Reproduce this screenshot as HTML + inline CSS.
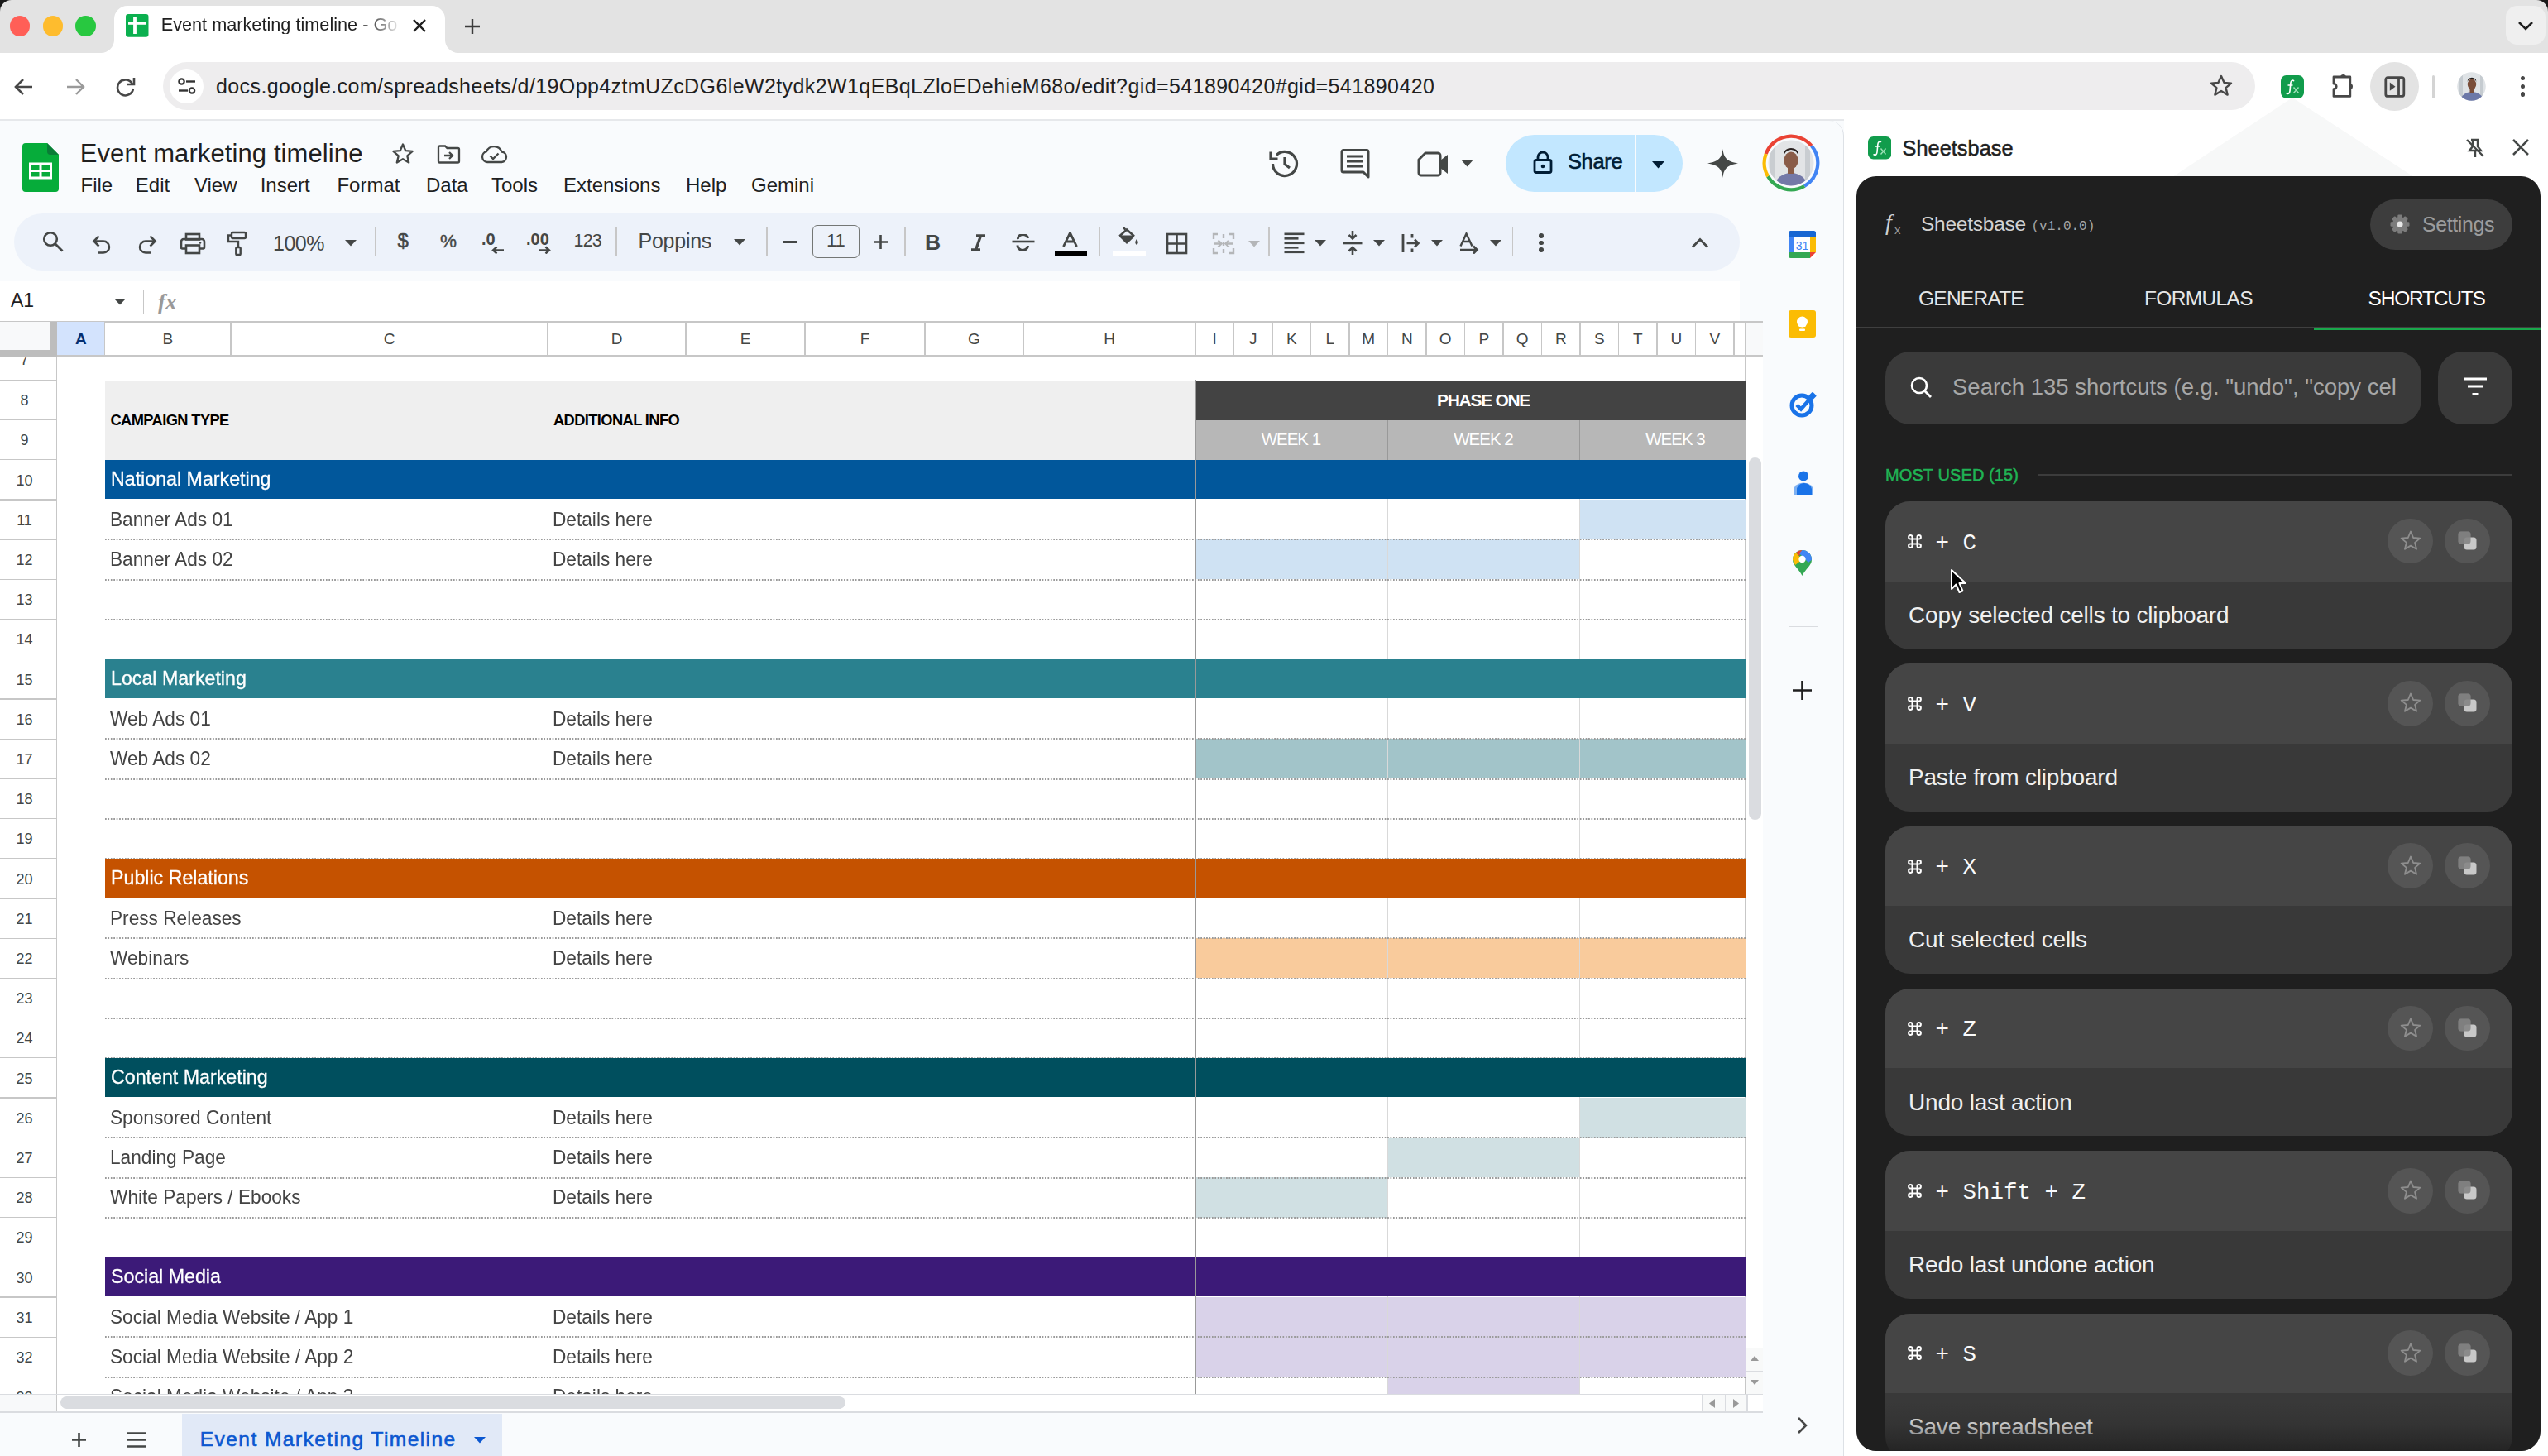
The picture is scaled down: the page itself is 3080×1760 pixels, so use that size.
<!DOCTYPE html><html><head><meta charset="utf-8"><style>html,body{margin:0;padding:0;width:3080px;height:1760px;overflow:hidden;position:relative;font-family:"Liberation Sans",sans-serif;background:#fff}</style></head><body>
<div style="position:absolute;left:0px;top:0px;width:3080px;height:64px;background:#e3e3e3"></div>
<div style="position:absolute;left:12.100000000000001px;top:19.2px;width:24.4px;height:24.4px;background:#ff5f57;border-radius:50%"></div>
<div style="position:absolute;left:51.8px;top:19.2px;width:24.4px;height:24.4px;background:#febc2e;border-radius:50%"></div>
<div style="position:absolute;left:91.39999999999999px;top:19.2px;width:24.4px;height:24.4px;background:#28c840;border-radius:50%"></div>
<div style="position:absolute;left:138px;top:7px;width:400px;height:64px;background:#fff;border-radius:16px 16px 0 0"></div>
<svg style="position:absolute;left:122px;top:48px" width="16" height="16" viewBox="0 0 16 16"><path d="M16 0 V16 H0 A16 16 0 0 0 16 0Z" fill="#fff"/></svg>
<svg style="position:absolute;left:538px;top:48px" width="16" height="16" viewBox="0 0 16 16"><path d="M0 0 V16 H16 A16 16 0 0 1 0 0Z" fill="#fff"/></svg>
<svg style="position:absolute;left:152px;top:17px" width="27.5" height="27.7" viewBox="0 0 27.5 27.7"><rect x="0" y="0" width="27.5" height="27.7" rx="3" fill="#0bb04f"/><rect x="9.1" y="3" width="3.8" height="21" fill="#fff"/><rect x="3" y="9.2" width="21" height="3.6" fill="#fff"/></svg>
<div style="position:absolute;left:194.7px;top:19.26px;font-size:21.7px;line-height:21.7px;color:#1f1f1f;font-weight:normal;font-family:'Liberation Sans', sans-serif;white-space:nowrap;letter-spacing:0px;width:292px;overflow:hidden;-webkit-mask-image:linear-gradient(90deg,#000 84%,transparent 100%)">Event marketing timeline - Go</div>
<svg style="position:absolute;left:498px;top:22px" width="18" height="18" viewBox="0 0 18 18"><path d="M2 2 L16 16 M16 2 L2 16" stroke="#1f1f1f" stroke-width="2.4"/></svg>
<svg style="position:absolute;left:561px;top:22px" width="20" height="20" viewBox="0 0 20 20"><path d="M10 1 V19 M1 10 H19" stroke="#3c3c3c" stroke-width="2.4"/></svg>
<div style="position:absolute;left:3029px;top:7px;width:48px;height:47px;background:#efefef;border-radius:14px"></div>
<svg style="position:absolute;left:3043px;top:24px" width="20" height="14" viewBox="0 0 20 14"><path d="M2 3 L10 11 L18 3" stroke="#1f1f1f" stroke-width="2.6" fill="none"/></svg>
<svg style="position:absolute;left:0px;top:0px" width="14" height="14" viewBox="0 0 14 14"><path d="M0 0 H14 A14 14 0 0 0 0 14Z" fill="#1a1a1a"/></svg>
<svg style="position:absolute;left:3066px;top:0px" width="14" height="14" viewBox="0 0 14 14"><path d="M14 0 H0 A14 14 0 0 1 14 14Z" fill="#1a1a1a"/></svg>
<div style="position:absolute;left:0px;top:64px;width:3080px;height:81px;background:#fff"></div>
<div style="position:absolute;left:0px;top:144px;width:2229px;height:2px;background:#e6e8eb"></div>
<svg style="position:absolute;left:17px;top:94px" width="24" height="22" viewBox="0 0 24 22"><path d="M22 11 H3 M11 2 L2 11 L11 20" stroke="#474747" stroke-width="2.6" fill="none"/></svg>
<svg style="position:absolute;left:79px;top:94px" width="24" height="22" viewBox="0 0 24 22"><path d="M2 11 H21 M13 2 L22 11 L13 20" stroke="#9a9a9a" stroke-width="2.4" fill="none"/></svg>
<svg style="position:absolute;left:139px;top:93px" width="26" height="24" viewBox="0 0 26 24"><path d="M21 8.5 A9.5 9.5 0 1 0 22 14" stroke="#474747" stroke-width="2.6" fill="none"/><path d="M23 1 V9 H15" stroke="#474747" stroke-width="2.6" fill="none"/></svg>
<div style="position:absolute;left:197px;top:75px;width:2529px;height:58px;background:#eeedee;border-radius:29px"></div>
<div style="position:absolute;left:205.2px;top:84px;width:40.8px;height:40.8px;background:#fff;border-radius:50%"></div>
<svg style="position:absolute;left:213px;top:92px" width="26" height="26" viewBox="0 0 26 26"><circle cx="6.5" cy="6.5" r="3.2" stroke="#333" stroke-width="2.2" fill="none"/><path d="M12 6.5 H23" stroke="#333" stroke-width="2.4"/><circle cx="19" cy="17.5" r="3.2" stroke="#333" stroke-width="2.2" fill="none"/><path d="M3 17.5 H14" stroke="#333" stroke-width="2.4"/></svg>
<div style="position:absolute;left:261px;top:91.55px;font-size:25px;line-height:25px;color:#1f1f1f;font-weight:normal;font-family:'Liberation Sans', sans-serif;white-space:nowrap;letter-spacing:0.4px;">docs.google.com<span style="color:#1f1f1f">/spreadsheets/d/19Opp4ztmUZcDG6leW2tydk2W1qEBqLZloEDehieM68o/edit?gid=541890420#gid=541890420</span></div>
<svg style="position:absolute;left:2670px;top:89px" width="30" height="30" viewBox="0 0 30 30"><path d="M15 3 L18.6 11 L27 11.6 L20.6 17.2 L22.6 25.6 L15 21 L7.4 25.6 L9.4 17.2 L3 11.6 L11.4 11 Z" stroke="#474747" stroke-width="2.4" fill="none" stroke-linejoin="round"/></svg>
<svg style="position:absolute;left:2757px;top:90.7px" width="28" height="27.6" viewBox="0 0 28 27.6"><rect width="28" height="27.6" rx="6.5" fill="#119c4c"/><path d="M15.5 6.5 C13.5 5.5 12 7 11.8 10 L11 19 C10.7 22 9 23 7 21.8" stroke="#fff" stroke-width="1.7" fill="none" stroke-linecap="round"/><path d="M8.5 12 H14.5" stroke="#fff" stroke-width="1.5"/><path d="M15.5 14.5 L21.5 21.5 M21.5 14.5 L15.5 21.5" stroke="#9fe0b8" stroke-width="1.5"/></svg>
<svg style="position:absolute;left:2816px;top:85px" width="38" height="36" viewBox="0 0 38 36"><path d="M5 8 H24.8 V31.4 H5 V22.6 A3.2 3.2 0 0 0 5 16.2 Z" stroke="#474747" stroke-width="2.8" fill="none" stroke-linejoin="round"/><path d="M13 8.5 A3.5 3.5 0 0 1 20 8.5Z" fill="#474747"/><path d="M24.5 16 A3.5 3.5 0 0 1 24.5 23Z" fill="#474747"/></svg>
<div style="position:absolute;left:2865.4px;top:75px;width:58.8px;height:58.8px;background:#e3e3e3;border-radius:50%"></div>
<svg style="position:absolute;left:2880px;top:90px" width="30" height="30" viewBox="0 0 30 30"><rect x="3.8" y="3.7" width="22" height="22.7" rx="2.5" stroke="#474747" stroke-width="2.8" fill="none"/><path d="M19.5 3.7 V26.4" stroke="#474747" stroke-width="2.8"/><path d="M8.8 9.6 L15.5 14.7 L8.8 19.8Z" fill="#474747"/></svg>
<div style="position:absolute;left:2940px;top:91px;width:2.5px;height:28px;background:#d4d4d4;border-radius:2px"></div>
<svg style="position:absolute;left:2970px;top:87px" width="35" height="35" viewBox="0 0 35 35"><defs><clipPath id="av2"><circle cx="17.5" cy="17.5" r="17.3"/></clipPath></defs><g clip-path="url(#av2)"><rect width="35" height="35" fill="#dfe3e6"/><rect x="3" y="0" width="4" height="35" fill="#c5cbd0"/><rect x="28" y="0" width="4" height="35" fill="#c5cbd0"/><ellipse cx="18" cy="33" rx="13" ry="9" fill="#6c78a8"/><rect x="15.5" y="20" width="5" height="6" fill="#7a4e3a"/><ellipse cx="18" cy="15" rx="5.2" ry="6.5" fill="#7a4e3a"/><path d="M12.6 13 A5.4 5 0 0 1 23.4 13 L23 9.5 A5.5 4.5 0 0 0 13 9.5Z" fill="#1f1a18"/></g></svg>
<div style="position:absolute;left:3046.6px;top:92.0px;width:5.4px;height:5.4px;background:#474747;border-radius:50%"></div>
<div style="position:absolute;left:3046.6px;top:101.7px;width:5.4px;height:5.4px;background:#474747;border-radius:50%"></div>
<div style="position:absolute;left:3046.6px;top:111.3px;width:5.4px;height:5.4px;background:#474747;border-radius:50%"></div>
<div style="position:absolute;left:0px;top:146px;width:2229px;height:1614px;background:#f9fbfd"></div>
<div style="position:absolute;left:2100px;top:146px;width:129px;height:1614px;border-right:1.5px solid #dde1e6;border-top-right-radius:18px;box-sizing:border-box;background:#f9fbfd"></div>
<svg style="position:absolute;left:27px;top:173px" width="44" height="59" viewBox="0 0 44 59"><path d="M4 0 H30 L44 14 V55 A4 4 0 0 1 40 59 H4 A4 4 0 0 1 0 55 V4 A4 4 0 0 1 4 0Z" fill="#06ac3a"/><path d="M30 0 L44 14 H34 A4 4 0 0 1 30 10Z" fill="#0a7d37"/><rect x="8" y="23.5" width="28" height="20" fill="#fff"/><rect x="11" y="26.5" width="9.5" height="5.5" fill="#06ac3a"/><rect x="23.5" y="26.5" width="9.5" height="5.5" fill="#06ac3a"/><rect x="11" y="35" width="9.5" height="5.5" fill="#06ac3a"/><rect x="23.5" y="35" width="9.5" height="5.5" fill="#06ac3a"/></svg>
<div style="position:absolute;left:96.7px;top:169.65px;font-size:31px;line-height:31px;color:#1f1f1f;font-weight:normal;font-family:'Liberation Sans', sans-serif;white-space:nowrap;letter-spacing:0.1px;">Event marketing timeline</div>
<svg style="position:absolute;left:473px;top:172px" width="28" height="27" viewBox="0 0 28 27"><path d="M14 2.5 L17.3 10.2 L25.6 10.9 L19.3 16.4 L21.2 24.5 L14 20.2 L6.8 24.5 L8.7 16.4 L2.4 10.9 L10.7 10.2Z" stroke="#444746" stroke-width="2.3" fill="none" stroke-linejoin="round"/></svg>
<svg style="position:absolute;left:528px;top:175px" width="29" height="23" viewBox="0 0 29 23"><path d="M2 3 A1.5 1.5 0 0 1 3.5 1.5 H10 L12.5 4 H25.5 A1.5 1.5 0 0 1 27 5.5 V20 A1.5 1.5 0 0 1 25.5 21.5 H3.5 A1.5 1.5 0 0 1 2 20Z" stroke="#444746" stroke-width="2.3" fill="none"/><path d="M9 13 H19 M15 9 L19 13 L15 17" stroke="#444746" stroke-width="2.3" fill="none"/></svg>
<svg style="position:absolute;left:581px;top:175px" width="33" height="23" viewBox="0 0 33 23"><path d="M8 21 A6.5 6.5 0 0 1 7 8.2 A10 10 0 0 1 25.5 8.5 A6.3 6.3 0 0 1 25.5 21 Z" stroke="#444746" stroke-width="2.3" fill="none" stroke-linejoin="round"/><path d="M11.5 13.5 L15 17 L21.5 10.5" stroke="#444746" stroke-width="2.3" fill="none"/></svg>
<div style="position:absolute;left:97.5px;top:212.00px;font-size:24px;line-height:24px;color:#1f1f1f;font-weight:normal;font-family:'Liberation Sans', sans-serif;white-space:nowrap;letter-spacing:0px;">File</div>
<div style="position:absolute;left:163.8px;top:212.00px;font-size:24px;line-height:24px;color:#1f1f1f;font-weight:normal;font-family:'Liberation Sans', sans-serif;white-space:nowrap;letter-spacing:0px;">Edit</div>
<div style="position:absolute;left:234.9px;top:212.00px;font-size:24px;line-height:24px;color:#1f1f1f;font-weight:normal;font-family:'Liberation Sans', sans-serif;white-space:nowrap;letter-spacing:0px;">View</div>
<div style="position:absolute;left:314.7px;top:212.00px;font-size:24px;line-height:24px;color:#1f1f1f;font-weight:normal;font-family:'Liberation Sans', sans-serif;white-space:nowrap;letter-spacing:0px;">Insert</div>
<div style="position:absolute;left:407.4px;top:212.00px;font-size:24px;line-height:24px;color:#1f1f1f;font-weight:normal;font-family:'Liberation Sans', sans-serif;white-space:nowrap;letter-spacing:0px;">Format</div>
<div style="position:absolute;left:515px;top:212.00px;font-size:24px;line-height:24px;color:#1f1f1f;font-weight:normal;font-family:'Liberation Sans', sans-serif;white-space:nowrap;letter-spacing:0px;">Data</div>
<div style="position:absolute;left:594px;top:212.00px;font-size:24px;line-height:24px;color:#1f1f1f;font-weight:normal;font-family:'Liberation Sans', sans-serif;white-space:nowrap;letter-spacing:0px;">Tools</div>
<div style="position:absolute;left:681px;top:212.00px;font-size:24px;line-height:24px;color:#1f1f1f;font-weight:normal;font-family:'Liberation Sans', sans-serif;white-space:nowrap;letter-spacing:0px;">Extensions</div>
<div style="position:absolute;left:829px;top:212.00px;font-size:24px;line-height:24px;color:#1f1f1f;font-weight:normal;font-family:'Liberation Sans', sans-serif;white-space:nowrap;letter-spacing:0px;">Help</div>
<div style="position:absolute;left:908px;top:212.00px;font-size:24px;line-height:24px;color:#1f1f1f;font-weight:normal;font-family:'Liberation Sans', sans-serif;white-space:nowrap;letter-spacing:0px;">Gemini</div>
<svg style="position:absolute;left:1533px;top:179px" width="40" height="38" viewBox="0 0 40 38"><path d="M5.5 19 A14.5 14.5 0 1 0 10 8.5" stroke="#444746" stroke-width="3.2" fill="none"/><path d="M3 4.5 V13 H11.5" stroke="#444746" stroke-width="3.2" fill="none"/><path d="M20 11 V19.5 L26 24" stroke="#444746" stroke-width="3.2" fill="none"/></svg>
<svg style="position:absolute;left:1620px;top:180px" width="38" height="37" viewBox="0 0 38 37"><path d="M2 3.5 A2 2 0 0 1 4 1.5 H32 A2 2 0 0 1 34 3.5 V34 L28 28 H4 A2 2 0 0 1 2 26Z" stroke="#444746" stroke-width="3" fill="none" stroke-linejoin="round"/><path d="M8 9 H28 M8 15 H28 M8 21 H28" stroke="#444746" stroke-width="3"/></svg>
<svg style="position:absolute;left:1713px;top:183px" width="40" height="31" viewBox="0 0 40 31"><path d="M10 2 H25 A3 3 0 0 1 28 5 V26 A3 3 0 0 1 25 29 H5 A3 3 0 0 1 2 26 V10Z" stroke="#444746" stroke-width="3" fill="none" stroke-linejoin="round"/><path d="M28 11 L37 4 V27 L28 20Z" fill="#444746"/></svg>
<svg style="position:absolute;left:1766px;top:193px" width="15" height="9" viewBox="0 0 15 9"><path d="M0 0 H15 L7.5 8.5Z" fill="#444746"/></svg>
<div style="position:absolute;left:1820px;top:162.7px;width:214px;height:69.3px;background:#c2e7ff;border-radius:35px"></div>
<div style="position:absolute;left:1975.5px;top:162.7px;width:1.6px;height:69.3px;background:#f9fbfd"></div>
<svg style="position:absolute;left:1853px;top:182px" width="24" height="28" viewBox="0 0 24 28"><rect x="2" y="11.5" width="20" height="15" rx="2" stroke="#001d35" stroke-width="2.8" fill="none"/><path d="M6 11.5 V8 A6 6 0 0 1 18 8 V11.5" stroke="#001d35" stroke-width="2.8" fill="none"/><circle cx="12" cy="19" r="2.3" fill="#001d35"/></svg>
<div style="position:absolute;left:1894.9px;top:183.42px;font-size:25.5px;line-height:25.5px;color:#001d35;font-weight:normal;font-family:'Liberation Sans', sans-serif;white-space:nowrap;letter-spacing:-0.3px;-webkit-text-stroke:0.6px #001d35">Share</div>
<svg style="position:absolute;left:1997px;top:195px" width="15" height="9" viewBox="0 0 15 9"><path d="M0 0 H15 L7.5 8.5Z" fill="#001d35"/></svg>
<svg style="position:absolute;left:2064px;top:180px" width="37" height="35" viewBox="0 0 37 35"><path d="M18.5 0 C19.5 10 23 15.5 37 17.5 C23 19.5 19.5 25 18.5 35 C17.5 25 14 19.5 0 17.5 C14 15.5 17.5 10 18.5 0Z" fill="#444746"/></svg>
<svg style="position:absolute;left:2130px;top:162px" width="70" height="70" viewBox="0 0 70 70"><path d="M4.65 23.95 A32.3 32.3 0 0 1 59.74 14.24" stroke="#ea4335" stroke-width="4.2" fill="none"/><path d="M59.74 14.24 A32.3 32.3 0 0 1 51.15 62.97" stroke="#4285f4" stroke-width="4.2" fill="none"/><path d="M51.15 62.97 A32.3 32.3 0 0 1 7.03 51.15" stroke="#34a853" stroke-width="4.2" fill="none"/><path d="M7.03 51.15 A32.3 32.3 0 0 1 4.65 23.95" stroke="#fbbc04" stroke-width="4.2" fill="none"/><defs><clipPath id="avc"><circle cx="35" cy="35" r="27.5"/></clipPath></defs><g clip-path="url(#avc)"><rect width="70" height="70" fill="#e2e4e6"/><rect x="10" y="8" width="6" height="60" fill="#c9cdd1"/><rect x="52" y="8" width="6" height="60" fill="#c9cdd1"/><ellipse cx="35" cy="62" rx="19" ry="15" fill="#7479a8"/><rect x="31" y="40" width="8" height="8" fill="#8a5c48"/><ellipse cx="35" cy="32" rx="8.5" ry="10.5" fill="#8a5c48"/><path d="M26 28 A9 9 0 0 1 44 28 L44 24 A9 7 0 0 0 26 24Z" fill="#2a2220"/></g></svg>
<div style="position:absolute;left:17px;top:257.8px;width:2086.4px;height:68.8px;background:#edf2fa;border-radius:34.4px"></div>
<svg style="position:absolute;left:50px;top:278px" width="28" height="28" viewBox="0 0 28 28"><circle cx="11" cy="11" r="7.8" stroke="#444746" stroke-width="2.6" fill="none"/><path d="M16.8 16.8 L25.5 25.5" stroke="#444746" stroke-width="2.8"/></svg>
<svg style="position:absolute;left:110px;top:283px" width="26" height="24" viewBox="0 0 26 24"><path d="M4 8.5 H15 A7 7 0 0 1 15 22.5 H8" stroke="#444746" stroke-width="2.6" fill="none"/><path d="M9.5 2.5 L3.5 8.5 L9.5 14.5" stroke="#444746" stroke-width="2.6" fill="none"/></svg>
<svg style="position:absolute;left:165px;top:283px" width="26" height="24" viewBox="0 0 26 24"><path d="M22 8.5 H11 A7 7 0 0 0 11 22.5 H18" stroke="#444746" stroke-width="2.6" fill="none"/><path d="M16.5 2.5 L22.5 8.5 L16.5 14.5" stroke="#444746" stroke-width="2.6" fill="none"/></svg>
<svg style="position:absolute;left:217px;top:281px" width="32" height="27" viewBox="0 0 32 27"><rect x="8" y="2" width="16" height="6.5" stroke="#444746" stroke-width="2.6" fill="none"/><path d="M8 19.5 H3.5 A1.5 1.5 0 0 1 2 18 V11 A3 3 0 0 1 5 8 H27 A3 3 0 0 1 30 11 V18 A1.5 1.5 0 0 1 28.5 19.5 H24" stroke="#444746" stroke-width="2.6" fill="none"/><rect x="8" y="15.5" width="16" height="9.5" stroke="#444746" stroke-width="2.6" fill="none"/><circle cx="25" cy="12.5" r="1.3" fill="#444746"/></svg>
<svg style="position:absolute;left:273px;top:279px" width="26" height="31" viewBox="0 0 26 31"><rect x="7" y="2" width="17" height="7" rx="1.5" stroke="#444746" stroke-width="2.4" fill="none"/><path d="M7 5.5 H3 V13 H15 V21" stroke="#444746" stroke-width="2.4" fill="none"/><rect x="12.3" y="20" width="5.4" height="9" rx="1" stroke="#444746" stroke-width="2.4" fill="none"/></svg>
<div style="position:absolute;left:330px;top:281.75px;font-size:25px;line-height:25px;color:#444746;font-weight:normal;font-family:'Liberation Sans', sans-serif;white-space:nowrap;letter-spacing:-0.5px;">100%</div>
<svg style="position:absolute;left:417px;top:289.5px" width="14" height="8" viewBox="0 0 14 8"><path d="M0 0 H14 L7 7.5Z" fill="#444746"/></svg>
<div style="position:absolute;left:453.25px;top:275px;width:1.5px;height:34px;background:#c7c7c7"></div>
<div style="position:absolute;left:480.5px;top:279.10px;font-size:24px;line-height:24px;color:#444746;font-weight:normal;font-family:'Liberation Sans', sans-serif;white-space:nowrap;letter-spacing:0px;-webkit-text-stroke:0.5px #444746">$</div>
<div style="position:absolute;left:532px;top:281.18px;font-size:22.5px;line-height:22.5px;color:#444746;font-weight:normal;font-family:'Liberation Sans', sans-serif;white-space:nowrap;letter-spacing:0px;-webkit-text-stroke:0.4px #444746">%</div>
<svg style="position:absolute;left:582px;top:279px" width="32" height="28" viewBox="0 0 32 28"><text x="0" y="17" font-family="Liberation Sans" font-weight="bold" font-size="20" fill="#444746">.0</text><path d="M27 23.5 H14 M18.5 19.5 L14 23.5 L18.5 27.5" stroke="#444746" stroke-width="2.4" fill="none"/></svg>
<svg style="position:absolute;left:636px;top:279px" width="34" height="28" viewBox="0 0 34 28"><text x="0" y="17" font-family="Liberation Sans" font-weight="bold" font-size="20" fill="#444746">.00</text><path d="M15 23.5 H28 M23.5 19.5 L28 23.5 L23.5 27.5" stroke="#444746" stroke-width="2.4" fill="none"/></svg>
<div style="position:absolute;left:693.5px;top:281.23px;font-size:21.5px;line-height:21.5px;color:#444746;font-weight:normal;font-family:'Liberation Sans', sans-serif;white-space:nowrap;letter-spacing:-0.8px;">123</div>
<div style="position:absolute;left:744.25px;top:275px;width:1.5px;height:34px;background:#c7c7c7"></div>
<div style="position:absolute;left:771.5px;top:279.05px;font-size:25px;line-height:25px;color:#444746;font-weight:normal;font-family:'Liberation Sans', sans-serif;white-space:nowrap;letter-spacing:-0.25px;">Poppins</div>
<svg style="position:absolute;left:887px;top:289px" width="14" height="8" viewBox="0 0 14 8"><path d="M0 0 H14 L7 7.5Z" fill="#444746"/></svg>
<div style="position:absolute;left:926.25px;top:275px;width:1.5px;height:34px;background:#c7c7c7"></div>
<div style="position:absolute;left:946px;top:291.3px;width:17px;height:2.6px;background:#444746"></div>
<div style="position:absolute;left:981.7px;top:272.4px;width:57.5px;height:39.6px;border:1.8px solid #747775;border-radius:6px;box-sizing:border-box"></div>
<div style="position:absolute;left:510.20000000000005px;width:1000px;text-align:center;top:280.38px;font-size:22.5px;line-height:22.5px;color:#444746;font-weight:normal;font-family:'Liberation Sans', sans-serif;white-space:nowrap;letter-spacing:-0.5px;">11</div>
<svg style="position:absolute;left:1055px;top:283px" width="19" height="19" viewBox="0 0 19 19"><path d="M9.5 1 V18 M1 9.5 H18" stroke="#444746" stroke-width="2.6"/></svg>
<div style="position:absolute;left:1093.25px;top:275px;width:1.5px;height:34px;background:#c7c7c7"></div>
<div style="position:absolute;left:1118px;top:280.08px;font-size:26.5px;line-height:26.5px;color:#444746;font-weight:bold;font-family:'Liberation Sans', sans-serif;white-space:nowrap;letter-spacing:0px;">B</div>
<svg style="position:absolute;left:1172px;top:283px" width="21" height="21" viewBox="0 0 21 21"><path d="M8 2 H19 M2 19 H13 M13.5 2 L7.5 19" stroke="#444746" stroke-width="3.4" fill="none"/></svg>
<svg style="position:absolute;left:1222px;top:283px" width="30" height="22" viewBox="0 0 30 22"><path d="M1.5 9 H28.5" stroke="#444746" stroke-width="2.6"/><path d="M8.5 6 A6 5 0 0 1 20.5 5" stroke="#444746" stroke-width="3" fill="none"/><path d="M8 13.5 A6 5.5 0 0 0 20.5 14" stroke="#444746" stroke-width="3" fill="none"/></svg>
<svg style="position:absolute;left:1284px;top:280px" width="19" height="19" viewBox="0 0 19 19"><path d="M1.5 18 L9.5 1.5 L17.5 18 M4.5 12 H14.5" stroke="#444746" stroke-width="2.8" fill="none"/></svg>
<div style="position:absolute;left:1274.5px;top:302.5px;width:39.5px;height:6.5px;background:#000"></div>
<div style="position:absolute;left:1328.75px;top:275px;width:1.5px;height:34px;background:#c7c7c7"></div>
<svg style="position:absolute;left:1350px;top:273px" width="28" height="27" viewBox="0 0 28 27"><path d="M8 2 L12.5 7" stroke="#444746" stroke-width="2.6"/><path d="M3 13 L12 4.5 L21.5 13 L12 22 Z" fill="#444746"/><path d="M3 13 L12 4.5 L21.5 13Z" fill="#edf2fa" transform="translate(0,-1.5)"/><path d="M3.2 12.5 L12 4.5 L21 12.5" stroke="#444746" stroke-width="2.6" fill="none"/><path d="M24 16 C22 19 21.5 21 24 23 C26.5 21 26 19 24 16Z" fill="#444746"/></svg>
<div style="position:absolute;left:1344.5px;top:302.5px;width:40px;height:6.5px;background:#fff"></div>
<svg style="position:absolute;left:1409px;top:281px" width="27" height="27" viewBox="0 0 27 27"><rect x="2" y="2" width="23" height="23" stroke="#444746" stroke-width="2.6" fill="none"/><path d="M13.5 2 V25 M2 13.5 H25" stroke="#444746" stroke-width="2.6"/></svg>
<svg style="position:absolute;left:1465px;top:281px" width="28" height="27" viewBox="0 0 28 27"><path d="M7 2 H2 V8 M2 19 V25 H7 M21 2 H26 V8 M26 19 V25 H21" stroke="#b4b6b8" stroke-width="2.4" fill="none"/><path d="M2 13.5 H11 M7.5 9.5 L11.5 13.5 L7.5 17.5 M26 13.5 H17 M20.5 9.5 L16.5 13.5 L20.5 17.5" stroke="#b4b6b8" stroke-width="2.4" fill="none"/><path d="M14 2 V7 M14 11 V16 M14 20 V25" stroke="#b4b6b8" stroke-width="2.4"/></svg>
<svg style="position:absolute;left:1509px;top:290.5px" width="14" height="8" viewBox="0 0 14 8"><path d="M0 0 H14 L7 7.5Z" fill="#b4b6b8"/></svg>
<div style="position:absolute;left:1533.25px;top:275px;width:1.5px;height:34px;background:#c7c7c7"></div>
<svg style="position:absolute;left:1551px;top:281px" width="27" height="26" viewBox="0 0 27 26"><rect x="1.5" y="0.5" width="24" height="2.6" fill="#444746"/><rect x="1.5" y="6" width="17" height="2.6" fill="#444746"/><rect x="1.5" y="11.5" width="24" height="2.6" fill="#444746"/><rect x="1.5" y="17" width="17" height="2.6" fill="#444746"/><rect x="1.5" y="22.5" width="24" height="2.6" fill="#444746"/></svg>
<svg style="position:absolute;left:1589px;top:290px" width="14" height="8" viewBox="0 0 14 8"><path d="M0 0 H14 L7 7.5Z" fill="#444746"/></svg>
<svg style="position:absolute;left:1622px;top:278px" width="26" height="31" viewBox="0 0 26 31"><path d="M1.5 16 H24.5" stroke="#444746" stroke-width="2.6"/><path d="M13 1 V10 M8.5 6 L13 10.5 L17.5 6 M13 30 V21 M8.5 25.5 L13 21 L17.5 25.5" stroke="#444746" stroke-width="2.6" fill="none"/></svg>
<svg style="position:absolute;left:1659.5px;top:290px" width="14" height="8" viewBox="0 0 14 8"><path d="M0 0 H14 L7 7.5Z" fill="#444746"/></svg>
<svg style="position:absolute;left:1693px;top:282px" width="25" height="24" viewBox="0 0 25 24"><path d="M3 1 V23 M14 1 V5.5 M14 18.5 V23" stroke="#444746" stroke-width="2.8"/><path d="M7.5 12 H21.5 M17 7.5 L21.5 12 L17 16.5" stroke="#444746" stroke-width="2.6" fill="none"/></svg>
<svg style="position:absolute;left:1729.5px;top:290px" width="14" height="8" viewBox="0 0 14 8"><path d="M0 0 H14 L7 7.5Z" fill="#444746"/></svg>
<svg style="position:absolute;left:1764px;top:281px" width="26" height="26" viewBox="0 0 26 26"><path d="M1.5 16.5 L8.5 1.5 L15.5 16.5 M4.3 11 H13" stroke="#444746" stroke-width="2.4" fill="none"/><path d="M1 21 H21 M17 16.5 L21.5 21 L17 25.5" stroke="#444746" stroke-width="2.6" fill="none"/></svg>
<svg style="position:absolute;left:1800.5px;top:290px" width="14" height="8" viewBox="0 0 14 8"><path d="M0 0 H14 L7 7.5Z" fill="#444746"/></svg>
<div style="position:absolute;left:1827.75px;top:275px;width:1.5px;height:34px;background:#c7c7c7"></div>
<div style="position:absolute;left:1860px;top:282.2px;width:5.6px;height:5.6px;background:#444746;border-radius:50%"></div>
<div style="position:absolute;left:1860px;top:290.9px;width:5.6px;height:5.6px;background:#444746;border-radius:50%"></div>
<div style="position:absolute;left:1860px;top:299.2px;width:5.6px;height:5.6px;background:#444746;border-radius:50%"></div>
<svg style="position:absolute;left:2044px;top:287px" width="22" height="14" viewBox="0 0 22 14"><path d="M2 11.5 L11 2.5 L20 11.5" stroke="#444746" stroke-width="2.8" fill="none"/></svg>
<div style="position:absolute;left:0px;top:340px;width:2103.4px;height:49px;background:#fff"></div>
<div style="position:absolute;left:13px;top:351.70px;font-size:23px;line-height:23px;color:#1f1f1f;font-weight:normal;font-family:'Liberation Sans', sans-serif;white-space:nowrap;letter-spacing:0px;">A1</div>
<svg style="position:absolute;left:138px;top:361px" width="14" height="8" viewBox="0 0 14 8"><path d="M0 0 H14 L7 7.5Z" fill="#444746"/></svg>
<div style="position:absolute;left:172.5px;top:351px;width:1.5px;height:28px;background:#c7c7c7"></div>
<svg style="position:absolute;left:190px;top:350px" width="30" height="30" viewBox="0 0 30 30"><text x="1" y="24" font-family="Liberation Serif" font-style="italic" font-weight="bold" font-size="27" fill="#999">fx</text></svg>
<svg style="position:absolute;left:2162px;top:279px" width="33" height="33" viewBox="0 0 33 33"><rect x="0" y="0" width="33" height="33" rx="2.5" fill="#fff"/><path d="M2.5 0 H30.5 A2.5 2.5 0 0 1 33 2.5 V7 H0 V2.5 A2.5 2.5 0 0 1 2.5 0Z" fill="#1967d2"/><path d="M0 7 H7 V26 H0Z" fill="#4285f4"/><path d="M26 7 H33 V26 H26Z" fill="#fbbc04"/><path d="M0 26 H26 V33 H2.5 A2.5 2.5 0 0 1 0 30.5Z" fill="#34a853"/><path d="M26 26 H33 L26 33Z" fill="#ea4335"/><rect x="7" y="7" width="19" height="19" fill="#fff"/><text x="16.5" y="22.5" text-anchor="middle" font-family="Liberation Sans" font-size="14" fill="#4285f4">31</text></svg>
<svg style="position:absolute;left:2162px;top:375px" width="33" height="33" viewBox="0 0 33 33"><rect width="33" height="33" rx="3" fill="#fbbc04"/><circle cx="16.5" cy="14" r="6.5" fill="#fff"/><rect x="12.5" y="16" width="8" height="4" fill="#fff"/><rect x="13" y="22.5" width="7" height="2.5" rx="1" fill="#fff"/></svg>
<svg style="position:absolute;left:2163px;top:472px" width="34" height="33" viewBox="0 0 34 33"><circle cx="15" cy="18" r="12" stroke="#1a73e8" stroke-width="5" fill="none"/><path d="M9 17.5 L14 22.5 L26 9" stroke="#1a73e8" stroke-width="4.5" fill="none"/><rect x="24.5" y="3" width="7" height="7" rx="1" transform="rotate(45 28 6.5)" fill="#1a73e8"/></svg>
<svg style="position:absolute;left:2165px;top:569px" width="28" height="31" viewBox="0 0 28 31"><circle cx="15" cy="6.5" r="6" fill="#1a73e8"/><path d="M3 24 A12 9.5 0 0 1 27 24 V29 H3Z" fill="#1a73e8" opacity="0.55"/><path d="M7 29 V24 A9 8 0 0 1 25 22 V29Z" fill="#1a73e8"/></svg>
<svg style="position:absolute;left:2166px;top:664px" width="25" height="33" viewBox="0 0 25 33"><path d="M12.5 1 A11.5 11.5 0 0 1 24 12.5 C24 20 16 24 12.5 32 C9 24 1 20 1 12.5 A11.5 11.5 0 0 1 12.5 1Z" fill="#34a853"/><path d="M1 12.5 A11.5 11.5 0 0 1 5 4 L12.5 12.5 L4 19Z" fill="#fbbc04"/><path d="M5 4 A11.5 11.5 0 0 1 12.5 1 L9 8Z" fill="#ea4335"/><path d="M12.5 1 A11.5 11.5 0 0 1 24 12.5 L20 16 L9 5Z" fill="#4285f4"/><circle cx="12.5" cy="12" r="4.2" fill="#fff"/></svg>
<div style="position:absolute;left:2161.5px;top:756.5px;width:35px;height:1.6px;background:#dadce0"></div>
<svg style="position:absolute;left:2166px;top:822px" width="25" height="25" viewBox="0 0 25 25"><path d="M12.5 1 V24 M1 12.5 H24" stroke="#1f1f1f" stroke-width="2.6"/></svg>
<svg style="position:absolute;left:2171px;top:1712px" width="14" height="22" viewBox="0 0 14 22"><path d="M3 2 L12 11 L3 20" stroke="#474747" stroke-width="2.6" fill="none"/></svg>
<div style="position:absolute;left:0px;top:1705.5px;width:2131px;height:1.5px;background:#e1e3e6"></div>
<svg style="position:absolute;left:86px;top:1731px" width="19" height="19" viewBox="0 0 19 19"><path d="M9.5 1 V18 M1 9.5 H18" stroke="#444746" stroke-width="2.6"/></svg>
<svg style="position:absolute;left:152px;top:1730px" width="26" height="21" viewBox="0 0 26 21"><path d="M1 2.5 H25 M1 10.5 H25 M1 18.5 H25" stroke="#444746" stroke-width="2.6"/></svg>
<div style="position:absolute;left:220px;top:1708.5px;width:387px;height:52px;background:#e1e9f7"></div>
<div style="position:absolute;left:241.8px;top:1728.17px;font-size:24.5px;line-height:24.5px;color:#0b57d0;font-weight:normal;font-family:'Liberation Sans', sans-serif;white-space:nowrap;letter-spacing:1.45px;-webkit-text-stroke:0.6px #0b57d0">Event Marketing Timeline</div>
<svg style="position:absolute;left:573px;top:1737px" width="14" height="8" viewBox="0 0 14 8"><path d="M0 0 H14 L7 7.5Z" fill="#0b57d0"/></svg>
<div style="position:absolute;left:0px;top:389px;width:2131px;height:1296.5px;background:#fff;overflow:hidden"></div>
<div style="position:absolute;left:0px;top:389.4px;width:2131px;height:41.200000000000045px;background:#fff"></div>
<div style="position:absolute;left:0px;top:388.4px;width:2131px;height:1.3px;background:#c7c7c7"></div>
<div style="position:absolute;left:0px;top:429.3px;width:2110px;height:1.3px;background:#c7c7c7"></div>
<div style="position:absolute;left:69px;top:389.4px;width:57.5px;height:39.90000000000005px;background:#d3e3fd"></div>
<div style="position:absolute;left:-402.25px;width:1000px;text-align:center;top:399.85px;font-size:19px;line-height:19px;color:#062e6f;font-weight:bold;font-family:'Liberation Sans', sans-serif;white-space:nowrap;letter-spacing:0px;">A</div>
<div style="position:absolute;left:125.85px;top:389.4px;width:1.3px;height:41.200000000000045px;background:#c7c7c7"></div>
<div style="position:absolute;left:-297.25px;width:1000px;text-align:center;top:399.85px;font-size:19px;line-height:19px;color:#444746;font-weight:normal;font-family:'Liberation Sans', sans-serif;white-space:nowrap;letter-spacing:0px;">B</div>
<div style="position:absolute;left:278.35px;top:389.4px;width:1.3px;height:41.200000000000045px;background:#c7c7c7"></div>
<div style="position:absolute;left:-29.5px;width:1000px;text-align:center;top:399.85px;font-size:19px;line-height:19px;color:#444746;font-weight:normal;font-family:'Liberation Sans', sans-serif;white-space:nowrap;letter-spacing:0px;">C</div>
<div style="position:absolute;left:661.35px;top:389.4px;width:1.3px;height:41.200000000000045px;background:#c7c7c7"></div>
<div style="position:absolute;left:245.5px;width:1000px;text-align:center;top:399.85px;font-size:19px;line-height:19px;color:#444746;font-weight:normal;font-family:'Liberation Sans', sans-serif;white-space:nowrap;letter-spacing:0px;">D</div>
<div style="position:absolute;left:828.35px;top:389.4px;width:1.3px;height:41.200000000000045px;background:#c7c7c7"></div>
<div style="position:absolute;left:401.0px;width:1000px;text-align:center;top:399.85px;font-size:19px;line-height:19px;color:#444746;font-weight:normal;font-family:'Liberation Sans', sans-serif;white-space:nowrap;letter-spacing:0px;">E</div>
<div style="position:absolute;left:972.35px;top:389.4px;width:1.3px;height:41.200000000000045px;background:#c7c7c7"></div>
<div style="position:absolute;left:545.5px;width:1000px;text-align:center;top:399.85px;font-size:19px;line-height:19px;color:#444746;font-weight:normal;font-family:'Liberation Sans', sans-serif;white-space:nowrap;letter-spacing:0px;">F</div>
<div style="position:absolute;left:1117.35px;top:389.4px;width:1.3px;height:41.200000000000045px;background:#c7c7c7"></div>
<div style="position:absolute;left:677.5px;width:1000px;text-align:center;top:399.85px;font-size:19px;line-height:19px;color:#444746;font-weight:normal;font-family:'Liberation Sans', sans-serif;white-space:nowrap;letter-spacing:0px;">G</div>
<div style="position:absolute;left:1236.35px;top:389.4px;width:1.3px;height:41.200000000000045px;background:#c7c7c7"></div>
<div style="position:absolute;left:841.0px;width:1000px;text-align:center;top:399.85px;font-size:19px;line-height:19px;color:#444746;font-weight:normal;font-family:'Liberation Sans', sans-serif;white-space:nowrap;letter-spacing:0px;">H</div>
<div style="position:absolute;left:1444.35px;top:389.4px;width:1.3px;height:41.200000000000045px;background:#c7c7c7"></div>
<div style="position:absolute;left:968.25px;width:1000px;text-align:center;top:399.85px;font-size:19px;line-height:19px;color:#444746;font-weight:normal;font-family:'Liberation Sans', sans-serif;white-space:nowrap;letter-spacing:0px;">I</div>
<div style="position:absolute;left:1490.85px;top:389.4px;width:1.3px;height:41.200000000000045px;background:#c7c7c7"></div>
<div style="position:absolute;left:1014.75px;width:1000px;text-align:center;top:399.85px;font-size:19px;line-height:19px;color:#444746;font-weight:normal;font-family:'Liberation Sans', sans-serif;white-space:nowrap;letter-spacing:0px;">J</div>
<div style="position:absolute;left:1537.35px;top:389.4px;width:1.3px;height:41.200000000000045px;background:#c7c7c7"></div>
<div style="position:absolute;left:1061.25px;width:1000px;text-align:center;top:399.85px;font-size:19px;line-height:19px;color:#444746;font-weight:normal;font-family:'Liberation Sans', sans-serif;white-space:nowrap;letter-spacing:0px;">K</div>
<div style="position:absolute;left:1583.85px;top:389.4px;width:1.3px;height:41.200000000000045px;background:#c7c7c7"></div>
<div style="position:absolute;left:1107.75px;width:1000px;text-align:center;top:399.85px;font-size:19px;line-height:19px;color:#444746;font-weight:normal;font-family:'Liberation Sans', sans-serif;white-space:nowrap;letter-spacing:0px;">L</div>
<div style="position:absolute;left:1630.35px;top:389.4px;width:1.3px;height:41.200000000000045px;background:#c7c7c7"></div>
<div style="position:absolute;left:1154.25px;width:1000px;text-align:center;top:399.85px;font-size:19px;line-height:19px;color:#444746;font-weight:normal;font-family:'Liberation Sans', sans-serif;white-space:nowrap;letter-spacing:0px;">M</div>
<div style="position:absolute;left:1676.85px;top:389.4px;width:1.3px;height:41.200000000000045px;background:#c7c7c7"></div>
<div style="position:absolute;left:1200.75px;width:1000px;text-align:center;top:399.85px;font-size:19px;line-height:19px;color:#444746;font-weight:normal;font-family:'Liberation Sans', sans-serif;white-space:nowrap;letter-spacing:0px;">N</div>
<div style="position:absolute;left:1723.35px;top:389.4px;width:1.3px;height:41.200000000000045px;background:#c7c7c7"></div>
<div style="position:absolute;left:1247.25px;width:1000px;text-align:center;top:399.85px;font-size:19px;line-height:19px;color:#444746;font-weight:normal;font-family:'Liberation Sans', sans-serif;white-space:nowrap;letter-spacing:0px;">O</div>
<div style="position:absolute;left:1769.85px;top:389.4px;width:1.3px;height:41.200000000000045px;background:#c7c7c7"></div>
<div style="position:absolute;left:1293.75px;width:1000px;text-align:center;top:399.85px;font-size:19px;line-height:19px;color:#444746;font-weight:normal;font-family:'Liberation Sans', sans-serif;white-space:nowrap;letter-spacing:0px;">P</div>
<div style="position:absolute;left:1816.35px;top:389.4px;width:1.3px;height:41.200000000000045px;background:#c7c7c7"></div>
<div style="position:absolute;left:1340.25px;width:1000px;text-align:center;top:399.85px;font-size:19px;line-height:19px;color:#444746;font-weight:normal;font-family:'Liberation Sans', sans-serif;white-space:nowrap;letter-spacing:0px;">Q</div>
<div style="position:absolute;left:1862.85px;top:389.4px;width:1.3px;height:41.200000000000045px;background:#c7c7c7"></div>
<div style="position:absolute;left:1386.75px;width:1000px;text-align:center;top:399.85px;font-size:19px;line-height:19px;color:#444746;font-weight:normal;font-family:'Liberation Sans', sans-serif;white-space:nowrap;letter-spacing:0px;">R</div>
<div style="position:absolute;left:1909.35px;top:389.4px;width:1.3px;height:41.200000000000045px;background:#c7c7c7"></div>
<div style="position:absolute;left:1433.25px;width:1000px;text-align:center;top:399.85px;font-size:19px;line-height:19px;color:#444746;font-weight:normal;font-family:'Liberation Sans', sans-serif;white-space:nowrap;letter-spacing:0px;">S</div>
<div style="position:absolute;left:1955.85px;top:389.4px;width:1.3px;height:41.200000000000045px;background:#c7c7c7"></div>
<div style="position:absolute;left:1479.75px;width:1000px;text-align:center;top:399.85px;font-size:19px;line-height:19px;color:#444746;font-weight:normal;font-family:'Liberation Sans', sans-serif;white-space:nowrap;letter-spacing:0px;">T</div>
<div style="position:absolute;left:2002.35px;top:389.4px;width:1.3px;height:41.200000000000045px;background:#c7c7c7"></div>
<div style="position:absolute;left:1526.25px;width:1000px;text-align:center;top:399.85px;font-size:19px;line-height:19px;color:#444746;font-weight:normal;font-family:'Liberation Sans', sans-serif;white-space:nowrap;letter-spacing:0px;">U</div>
<div style="position:absolute;left:2048.85px;top:389.4px;width:1.3px;height:41.200000000000045px;background:#c7c7c7"></div>
<div style="position:absolute;left:1572.75px;width:1000px;text-align:center;top:399.85px;font-size:19px;line-height:19px;color:#444746;font-weight:normal;font-family:'Liberation Sans', sans-serif;white-space:nowrap;letter-spacing:0px;">V</div>
<div style="position:absolute;left:2095.35px;top:389.4px;width:1.3px;height:41.200000000000045px;background:#c7c7c7"></div>
<div style="position:absolute;left:2109.35px;top:389.4px;width:1.3px;height:1315.6px;background:#c7c7c7"></div>
<div style="position:absolute;left:0px;top:389.4px;width:61px;height:33.200000000000045px;background:#f8f9fa"></div>
<div style="position:absolute;left:61px;top:389.4px;width:8px;height:41.200000000000045px;background:#bdbdbd"></div>
<div style="position:absolute;left:0px;top:422.6px;width:69px;height:8px;background:#bdbdbd"></div>
<div style="position:absolute;left:0px;top:430.6px;width:68px;height:1254.9px;background:#fff"></div>
<div style="position:absolute;left:67.7px;top:430.6px;width:1.3px;height:1274.4px;background:#c7c7c7"></div>
<div style="position:absolute;left:0;top:430.6px;width:68px;height:29px;overflow:hidden">
<div style="position:absolute;left:-470.5px;width:1000px;text-align:center;top:-4.50px;font-size:18px;line-height:18px;color:#444746;font-weight:normal;font-family:'Liberation Sans', sans-serif;white-space:nowrap;letter-spacing:0px;">7</div>
</div>
<div style="position:absolute;left:0px;top:458.75px;width:68px;height:1.3px;background:#c7c7c7"></div>
<div style="position:absolute;left:-470.5px;width:1000px;text-align:center;top:475.10px;font-size:18px;line-height:18px;color:#444746;font-weight:normal;font-family:'Liberation Sans', sans-serif;white-space:nowrap;letter-spacing:0px;">8</div>
<div style="position:absolute;left:0px;top:506.95px;width:68px;height:1.3px;background:#c7c7c7"></div>
<div style="position:absolute;left:-470.5px;width:1000px;text-align:center;top:523.30px;font-size:18px;line-height:18px;color:#444746;font-weight:normal;font-family:'Liberation Sans', sans-serif;white-space:nowrap;letter-spacing:0px;">9</div>
<div style="position:absolute;left:0px;top:555.15px;width:68px;height:1.3px;background:#c7c7c7"></div>
<div style="position:absolute;left:-470.5px;width:1000px;text-align:center;top:571.50px;font-size:18px;line-height:18px;color:#444746;font-weight:normal;font-family:'Liberation Sans', sans-serif;white-space:nowrap;letter-spacing:0px;">10</div>
<div style="position:absolute;left:0px;top:603.35px;width:68px;height:1.3px;background:#c7c7c7"></div>
<div style="position:absolute;left:-470.5px;width:1000px;text-align:center;top:619.70px;font-size:18px;line-height:18px;color:#444746;font-weight:normal;font-family:'Liberation Sans', sans-serif;white-space:nowrap;letter-spacing:0px;">11</div>
<div style="position:absolute;left:0px;top:651.5500000000001px;width:68px;height:1.3px;background:#c7c7c7"></div>
<div style="position:absolute;left:-470.5px;width:1000px;text-align:center;top:667.90px;font-size:18px;line-height:18px;color:#444746;font-weight:normal;font-family:'Liberation Sans', sans-serif;white-space:nowrap;letter-spacing:0px;">12</div>
<div style="position:absolute;left:0px;top:699.75px;width:68px;height:1.3px;background:#c7c7c7"></div>
<div style="position:absolute;left:-470.5px;width:1000px;text-align:center;top:716.10px;font-size:18px;line-height:18px;color:#444746;font-weight:normal;font-family:'Liberation Sans', sans-serif;white-space:nowrap;letter-spacing:0px;">13</div>
<div style="position:absolute;left:0px;top:747.95px;width:68px;height:1.3px;background:#c7c7c7"></div>
<div style="position:absolute;left:-470.5px;width:1000px;text-align:center;top:764.30px;font-size:18px;line-height:18px;color:#444746;font-weight:normal;font-family:'Liberation Sans', sans-serif;white-space:nowrap;letter-spacing:0px;">14</div>
<div style="position:absolute;left:0px;top:796.15px;width:68px;height:1.3px;background:#c7c7c7"></div>
<div style="position:absolute;left:-470.5px;width:1000px;text-align:center;top:812.50px;font-size:18px;line-height:18px;color:#444746;font-weight:normal;font-family:'Liberation Sans', sans-serif;white-space:nowrap;letter-spacing:0px;">15</div>
<div style="position:absolute;left:0px;top:844.35px;width:68px;height:1.3px;background:#c7c7c7"></div>
<div style="position:absolute;left:-470.5px;width:1000px;text-align:center;top:860.70px;font-size:18px;line-height:18px;color:#444746;font-weight:normal;font-family:'Liberation Sans', sans-serif;white-space:nowrap;letter-spacing:0px;">16</div>
<div style="position:absolute;left:0px;top:892.5500000000001px;width:68px;height:1.3px;background:#c7c7c7"></div>
<div style="position:absolute;left:-470.5px;width:1000px;text-align:center;top:908.90px;font-size:18px;line-height:18px;color:#444746;font-weight:normal;font-family:'Liberation Sans', sans-serif;white-space:nowrap;letter-spacing:0px;">17</div>
<div style="position:absolute;left:0px;top:940.75px;width:68px;height:1.3px;background:#c7c7c7"></div>
<div style="position:absolute;left:-470.5px;width:1000px;text-align:center;top:957.10px;font-size:18px;line-height:18px;color:#444746;font-weight:normal;font-family:'Liberation Sans', sans-serif;white-space:nowrap;letter-spacing:0px;">18</div>
<div style="position:absolute;left:0px;top:988.95px;width:68px;height:1.3px;background:#c7c7c7"></div>
<div style="position:absolute;left:-470.5px;width:1000px;text-align:center;top:1005.30px;font-size:18px;line-height:18px;color:#444746;font-weight:normal;font-family:'Liberation Sans', sans-serif;white-space:nowrap;letter-spacing:0px;">19</div>
<div style="position:absolute;left:0px;top:1037.15px;width:68px;height:1.3px;background:#c7c7c7"></div>
<div style="position:absolute;left:-470.5px;width:1000px;text-align:center;top:1053.50px;font-size:18px;line-height:18px;color:#444746;font-weight:normal;font-family:'Liberation Sans', sans-serif;white-space:nowrap;letter-spacing:0px;">20</div>
<div style="position:absolute;left:0px;top:1085.35px;width:68px;height:1.3px;background:#c7c7c7"></div>
<div style="position:absolute;left:-470.5px;width:1000px;text-align:center;top:1101.70px;font-size:18px;line-height:18px;color:#444746;font-weight:normal;font-family:'Liberation Sans', sans-serif;white-space:nowrap;letter-spacing:0px;">21</div>
<div style="position:absolute;left:0px;top:1133.55px;width:68px;height:1.3px;background:#c7c7c7"></div>
<div style="position:absolute;left:-470.5px;width:1000px;text-align:center;top:1149.90px;font-size:18px;line-height:18px;color:#444746;font-weight:normal;font-family:'Liberation Sans', sans-serif;white-space:nowrap;letter-spacing:0px;">22</div>
<div style="position:absolute;left:0px;top:1181.75px;width:68px;height:1.3px;background:#c7c7c7"></div>
<div style="position:absolute;left:-470.5px;width:1000px;text-align:center;top:1198.10px;font-size:18px;line-height:18px;color:#444746;font-weight:normal;font-family:'Liberation Sans', sans-serif;white-space:nowrap;letter-spacing:0px;">23</div>
<div style="position:absolute;left:0px;top:1229.9499999999998px;width:68px;height:1.3px;background:#c7c7c7"></div>
<div style="position:absolute;left:-470.5px;width:1000px;text-align:center;top:1246.30px;font-size:18px;line-height:18px;color:#444746;font-weight:normal;font-family:'Liberation Sans', sans-serif;white-space:nowrap;letter-spacing:0px;">24</div>
<div style="position:absolute;left:0px;top:1278.15px;width:68px;height:1.3px;background:#c7c7c7"></div>
<div style="position:absolute;left:-470.5px;width:1000px;text-align:center;top:1294.50px;font-size:18px;line-height:18px;color:#444746;font-weight:normal;font-family:'Liberation Sans', sans-serif;white-space:nowrap;letter-spacing:0px;">25</div>
<div style="position:absolute;left:0px;top:1326.35px;width:68px;height:1.3px;background:#c7c7c7"></div>
<div style="position:absolute;left:-470.5px;width:1000px;text-align:center;top:1342.70px;font-size:18px;line-height:18px;color:#444746;font-weight:normal;font-family:'Liberation Sans', sans-serif;white-space:nowrap;letter-spacing:0px;">26</div>
<div style="position:absolute;left:0px;top:1374.55px;width:68px;height:1.3px;background:#c7c7c7"></div>
<div style="position:absolute;left:-470.5px;width:1000px;text-align:center;top:1390.90px;font-size:18px;line-height:18px;color:#444746;font-weight:normal;font-family:'Liberation Sans', sans-serif;white-space:nowrap;letter-spacing:0px;">27</div>
<div style="position:absolute;left:0px;top:1422.75px;width:68px;height:1.3px;background:#c7c7c7"></div>
<div style="position:absolute;left:-470.5px;width:1000px;text-align:center;top:1439.10px;font-size:18px;line-height:18px;color:#444746;font-weight:normal;font-family:'Liberation Sans', sans-serif;white-space:nowrap;letter-spacing:0px;">28</div>
<div style="position:absolute;left:0px;top:1470.9499999999998px;width:68px;height:1.3px;background:#c7c7c7"></div>
<div style="position:absolute;left:-470.5px;width:1000px;text-align:center;top:1487.30px;font-size:18px;line-height:18px;color:#444746;font-weight:normal;font-family:'Liberation Sans', sans-serif;white-space:nowrap;letter-spacing:0px;">29</div>
<div style="position:absolute;left:0px;top:1519.15px;width:68px;height:1.3px;background:#c7c7c7"></div>
<div style="position:absolute;left:-470.5px;width:1000px;text-align:center;top:1535.50px;font-size:18px;line-height:18px;color:#444746;font-weight:normal;font-family:'Liberation Sans', sans-serif;white-space:nowrap;letter-spacing:0px;">30</div>
<div style="position:absolute;left:0px;top:1567.35px;width:68px;height:1.3px;background:#c7c7c7"></div>
<div style="position:absolute;left:-470.5px;width:1000px;text-align:center;top:1583.70px;font-size:18px;line-height:18px;color:#444746;font-weight:normal;font-family:'Liberation Sans', sans-serif;white-space:nowrap;letter-spacing:0px;">31</div>
<div style="position:absolute;left:0px;top:1615.5500000000002px;width:68px;height:1.3px;background:#c7c7c7"></div>
<div style="position:absolute;left:-470.5px;width:1000px;text-align:center;top:1631.90px;font-size:18px;line-height:18px;color:#444746;font-weight:normal;font-family:'Liberation Sans', sans-serif;white-space:nowrap;letter-spacing:0px;">32</div>
<div style="position:absolute;left:0px;top:1663.75px;width:68px;height:1.3px;background:#c7c7c7"></div>
<div style="position:absolute;left:-470.5px;width:1000px;text-align:center;top:1680.10px;font-size:18px;line-height:18px;color:#444746;font-weight:normal;font-family:'Liberation Sans', sans-serif;white-space:nowrap;letter-spacing:0px;">33</div>
<div style="position:absolute;left:0px;top:1685.5px;width:2131px;height:20px;background:#f9fbfd"></div>
<div style="position:absolute;left:126.5px;top:461px;width:1318.5px;height:94.79999999999995px;background:#efefef"></div>
<div style="position:absolute;left:133.5px;top:498.74px;font-size:18.3px;line-height:18.3px;color:#000;font-weight:bold;font-family:'Liberation Sans', sans-serif;white-space:nowrap;letter-spacing:-0.6px;">CAMPAIGN TYPE</div>
<div style="position:absolute;left:669px;top:498.74px;font-size:18.3px;line-height:18.3px;color:#000;font-weight:bold;font-family:'Liberation Sans', sans-serif;white-space:nowrap;letter-spacing:-0.6px;">ADDITIONAL INFO</div>
<div style="position:absolute;left:1445px;top:461px;width:665px;height:47.599999999999966px;background:#434343"></div>
<div style="position:absolute;left:1293px;width:1000px;text-align:center;top:472.85px;font-size:21px;line-height:21px;color:#fff;font-weight:bold;font-family:'Liberation Sans', sans-serif;white-space:nowrap;letter-spacing:-1.3px;">PHASE ONE</div>
<div style="position:absolute;left:1445px;top:508.09999999999997px;width:665px;height:47.69999999999999px;background:#b7b7b7"></div>
<div style="position:absolute;left:1060.4px;width:1000px;text-align:center;top:520.98px;font-size:20.5px;line-height:20.5px;color:#fff;font-weight:normal;font-family:'Liberation Sans', sans-serif;white-space:nowrap;letter-spacing:-1px;">WEEK 1</div>
<div style="position:absolute;left:1293px;width:1000px;text-align:center;top:520.98px;font-size:20.5px;line-height:20.5px;color:#fff;font-weight:normal;font-family:'Liberation Sans', sans-serif;white-space:nowrap;letter-spacing:-1px;">WEEK 2</div>
<div style="position:absolute;left:1525px;width:1000px;text-align:center;top:520.98px;font-size:20.5px;line-height:20.5px;color:#fff;font-weight:normal;font-family:'Liberation Sans', sans-serif;white-space:nowrap;letter-spacing:-1px;">WEEK 3</div>
<div style="position:absolute;left:1676.5px;top:507.59999999999997px;width:1.2px;height:48.19999999999999px;background:#999"></div>
<div style="position:absolute;left:1909.0px;top:507.59999999999997px;width:1.2px;height:48.19999999999999px;background:#999"></div>
<div style="position:absolute;left:1909.5px;top:604.0px;width:200.5px;height:48.2px;background:#cfe2f3"></div>
<div style="position:absolute;left:1445px;top:652.2px;width:232px;height:48.2px;background:#cfe2f3"></div>
<div style="position:absolute;left:1677px;top:652.2px;width:232.5px;height:48.2px;background:#cfe2f3"></div>
<div style="position:absolute;left:1445px;top:893.2px;width:232px;height:48.2px;background:#a2c4c9"></div>
<div style="position:absolute;left:1677px;top:893.2px;width:232.5px;height:48.2px;background:#a2c4c9"></div>
<div style="position:absolute;left:1909.5px;top:893.2px;width:200.5px;height:48.2px;background:#a2c4c9"></div>
<div style="position:absolute;left:1445px;top:1134.2px;width:232px;height:48.2px;background:#f9cb9c"></div>
<div style="position:absolute;left:1677px;top:1134.2px;width:232.5px;height:48.2px;background:#f9cb9c"></div>
<div style="position:absolute;left:1909.5px;top:1134.2px;width:200.5px;height:48.2px;background:#f9cb9c"></div>
<div style="position:absolute;left:1909.5px;top:1327.0px;width:200.5px;height:48.2px;background:#d0e0e3"></div>
<div style="position:absolute;left:1677px;top:1375.2px;width:232.5px;height:48.2px;background:#d0e0e3"></div>
<div style="position:absolute;left:1445px;top:1423.4px;width:232px;height:48.2px;background:#d0e0e3"></div>
<div style="position:absolute;left:1445px;top:1568.0px;width:232px;height:48.2px;background:#d9d2e9"></div>
<div style="position:absolute;left:1677px;top:1568.0px;width:232.5px;height:48.2px;background:#d9d2e9"></div>
<div style="position:absolute;left:1909.5px;top:1568.0px;width:200.5px;height:48.2px;background:#d9d2e9"></div>
<div style="position:absolute;left:1445px;top:1616.2000000000003px;width:232px;height:48.2px;background:#d9d2e9"></div>
<div style="position:absolute;left:1677px;top:1616.2000000000003px;width:232.5px;height:48.2px;background:#d9d2e9"></div>
<div style="position:absolute;left:1909.5px;top:1616.2000000000003px;width:200.5px;height:48.2px;background:#d9d2e9"></div>
<div style="position:absolute;left:1677px;top:1664.4px;width:232.5px;height:21.09999999999991px;background:#d9d2e9"></div>
<div style="position:absolute;left:1676.5px;top:555.8px;width:1.2px;height:1129.7px;background:#d9d9d9"></div>
<div style="position:absolute;left:1909.0px;top:555.8px;width:1.2px;height:1129.7px;background:#d9d9d9"></div>
<div style="position:absolute;left:126.5px;top:651.4000000000001px;width:1983.5px;height:2px;background-image:linear-gradient(90deg,#9a9a9a 55%,transparent 55%);background-size:3.43px 2px"></div>
<div style="position:absolute;left:126.5px;top:699.6px;width:1983.5px;height:2px;background-image:linear-gradient(90deg,#9a9a9a 55%,transparent 55%);background-size:3.43px 2px"></div>
<div style="position:absolute;left:126.5px;top:747.8000000000001px;width:1983.5px;height:2px;background-image:linear-gradient(90deg,#9a9a9a 55%,transparent 55%);background-size:3.43px 2px"></div>
<div style="position:absolute;left:126.5px;top:796.0px;width:1983.5px;height:2px;background-image:linear-gradient(90deg,#9a9a9a 55%,transparent 55%);background-size:3.43px 2px"></div>
<div style="position:absolute;left:126.5px;top:892.4000000000001px;width:1983.5px;height:2px;background-image:linear-gradient(90deg,#9a9a9a 55%,transparent 55%);background-size:3.43px 2px"></div>
<div style="position:absolute;left:126.5px;top:940.6px;width:1983.5px;height:2px;background-image:linear-gradient(90deg,#9a9a9a 55%,transparent 55%);background-size:3.43px 2px"></div>
<div style="position:absolute;left:126.5px;top:988.8000000000001px;width:1983.5px;height:2px;background-image:linear-gradient(90deg,#9a9a9a 55%,transparent 55%);background-size:3.43px 2px"></div>
<div style="position:absolute;left:126.5px;top:1037.0000000000002px;width:1983.5px;height:2px;background-image:linear-gradient(90deg,#9a9a9a 55%,transparent 55%);background-size:3.43px 2px"></div>
<div style="position:absolute;left:126.5px;top:1133.4px;width:1983.5px;height:2px;background-image:linear-gradient(90deg,#9a9a9a 55%,transparent 55%);background-size:3.43px 2px"></div>
<div style="position:absolute;left:126.5px;top:1181.6000000000001px;width:1983.5px;height:2px;background-image:linear-gradient(90deg,#9a9a9a 55%,transparent 55%);background-size:3.43px 2px"></div>
<div style="position:absolute;left:126.5px;top:1229.8px;width:1983.5px;height:2px;background-image:linear-gradient(90deg,#9a9a9a 55%,transparent 55%);background-size:3.43px 2px"></div>
<div style="position:absolute;left:126.5px;top:1278.0000000000002px;width:1983.5px;height:2px;background-image:linear-gradient(90deg,#9a9a9a 55%,transparent 55%);background-size:3.43px 2px"></div>
<div style="position:absolute;left:126.5px;top:1374.4px;width:1983.5px;height:2px;background-image:linear-gradient(90deg,#9a9a9a 55%,transparent 55%);background-size:3.43px 2px"></div>
<div style="position:absolute;left:126.5px;top:1422.6000000000001px;width:1983.5px;height:2px;background-image:linear-gradient(90deg,#9a9a9a 55%,transparent 55%);background-size:3.43px 2px"></div>
<div style="position:absolute;left:126.5px;top:1470.8px;width:1983.5px;height:2px;background-image:linear-gradient(90deg,#9a9a9a 55%,transparent 55%);background-size:3.43px 2px"></div>
<div style="position:absolute;left:126.5px;top:1519.0000000000002px;width:1983.5px;height:2px;background-image:linear-gradient(90deg,#9a9a9a 55%,transparent 55%);background-size:3.43px 2px"></div>
<div style="position:absolute;left:126.5px;top:1615.4000000000003px;width:1983.5px;height:2px;background-image:linear-gradient(90deg,#9a9a9a 55%,transparent 55%);background-size:3.43px 2px"></div>
<div style="position:absolute;left:126.5px;top:1663.6000000000001px;width:1983.5px;height:2px;background-image:linear-gradient(90deg,#9a9a9a 55%,transparent 55%);background-size:3.43px 2px"></div>
<div style="position:absolute;left:126.5px;top:555.8px;width:1983.5px;height:47.2px;background:#01579b"></div>
<div style="position:absolute;left:133.5px;top:566.94px;font-size:24.3px;line-height:24.3px;color:#fff;font-weight:normal;font-family:'Liberation Sans', sans-serif;white-space:nowrap;letter-spacing:0px;-webkit-text-stroke:0.3px #fff;transform:scaleX(0.955);transform-origin:0 0">National Marketing</div>
<div style="position:absolute;left:126.5px;top:796.8px;width:1983.5px;height:47.2px;background:#2a818f"></div>
<div style="position:absolute;left:133.5px;top:807.94px;font-size:24.3px;line-height:24.3px;color:#fff;font-weight:normal;font-family:'Liberation Sans', sans-serif;white-space:nowrap;letter-spacing:0px;-webkit-text-stroke:0.3px #fff;transform:scaleX(0.955);transform-origin:0 0">Local Marketing</div>
<div style="position:absolute;left:126.5px;top:1037.8000000000002px;width:1983.5px;height:47.2px;background:#c55200"></div>
<div style="position:absolute;left:133.5px;top:1048.95px;font-size:24.3px;line-height:24.3px;color:#fff;font-weight:normal;font-family:'Liberation Sans', sans-serif;white-space:nowrap;letter-spacing:0px;-webkit-text-stroke:0.3px #fff;transform:scaleX(0.955);transform-origin:0 0">Public Relations</div>
<div style="position:absolute;left:126.5px;top:1278.8000000000002px;width:1983.5px;height:47.2px;background:#004f5e"></div>
<div style="position:absolute;left:133.5px;top:1289.95px;font-size:24.3px;line-height:24.3px;color:#fff;font-weight:normal;font-family:'Liberation Sans', sans-serif;white-space:nowrap;letter-spacing:0px;-webkit-text-stroke:0.3px #fff;transform:scaleX(0.955);transform-origin:0 0">Content Marketing</div>
<div style="position:absolute;left:126.5px;top:1519.8000000000002px;width:1983.5px;height:47.2px;background:#3c1a78"></div>
<div style="position:absolute;left:133.5px;top:1530.95px;font-size:24.3px;line-height:24.3px;color:#fff;font-weight:normal;font-family:'Liberation Sans', sans-serif;white-space:nowrap;letter-spacing:0px;-webkit-text-stroke:0.3px #fff;transform:scaleX(0.955);transform-origin:0 0">Social Media</div>
<div style="position:absolute;left:132.5px;top:615.77px;font-size:24.5px;line-height:24.5px;color:#434343;font-weight:normal;font-family:'Liberation Sans', sans-serif;white-space:nowrap;letter-spacing:0px;;transform:scaleX(0.925);transform-origin:0 0">Banner Ads 01</div>
<div style="position:absolute;left:668px;top:615.77px;font-size:24.5px;line-height:24.5px;color:#434343;font-weight:normal;font-family:'Liberation Sans', sans-serif;white-space:nowrap;letter-spacing:0px;;transform:scaleX(0.925);transform-origin:0 0">Details here</div>
<div style="position:absolute;left:132.5px;top:663.98px;font-size:24.5px;line-height:24.5px;color:#434343;font-weight:normal;font-family:'Liberation Sans', sans-serif;white-space:nowrap;letter-spacing:0px;;transform:scaleX(0.925);transform-origin:0 0">Banner Ads 02</div>
<div style="position:absolute;left:668px;top:663.98px;font-size:24.5px;line-height:24.5px;color:#434343;font-weight:normal;font-family:'Liberation Sans', sans-serif;white-space:nowrap;letter-spacing:0px;;transform:scaleX(0.925);transform-origin:0 0">Details here</div>
<div style="position:absolute;left:132.5px;top:856.77px;font-size:24.5px;line-height:24.5px;color:#434343;font-weight:normal;font-family:'Liberation Sans', sans-serif;white-space:nowrap;letter-spacing:0px;;transform:scaleX(0.925);transform-origin:0 0">Web Ads 01</div>
<div style="position:absolute;left:668px;top:856.77px;font-size:24.5px;line-height:24.5px;color:#434343;font-weight:normal;font-family:'Liberation Sans', sans-serif;white-space:nowrap;letter-spacing:0px;;transform:scaleX(0.925);transform-origin:0 0">Details here</div>
<div style="position:absolute;left:132.5px;top:904.98px;font-size:24.5px;line-height:24.5px;color:#434343;font-weight:normal;font-family:'Liberation Sans', sans-serif;white-space:nowrap;letter-spacing:0px;;transform:scaleX(0.925);transform-origin:0 0">Web Ads 02</div>
<div style="position:absolute;left:668px;top:904.98px;font-size:24.5px;line-height:24.5px;color:#434343;font-weight:normal;font-family:'Liberation Sans', sans-serif;white-space:nowrap;letter-spacing:0px;;transform:scaleX(0.925);transform-origin:0 0">Details here</div>
<div style="position:absolute;left:132.5px;top:1097.77px;font-size:24.5px;line-height:24.5px;color:#434343;font-weight:normal;font-family:'Liberation Sans', sans-serif;white-space:nowrap;letter-spacing:0px;;transform:scaleX(0.925);transform-origin:0 0">Press Releases</div>
<div style="position:absolute;left:668px;top:1097.77px;font-size:24.5px;line-height:24.5px;color:#434343;font-weight:normal;font-family:'Liberation Sans', sans-serif;white-space:nowrap;letter-spacing:0px;;transform:scaleX(0.925);transform-origin:0 0">Details here</div>
<div style="position:absolute;left:132.5px;top:1145.97px;font-size:24.5px;line-height:24.5px;color:#434343;font-weight:normal;font-family:'Liberation Sans', sans-serif;white-space:nowrap;letter-spacing:0px;;transform:scaleX(0.925);transform-origin:0 0">Webinars</div>
<div style="position:absolute;left:668px;top:1145.97px;font-size:24.5px;line-height:24.5px;color:#434343;font-weight:normal;font-family:'Liberation Sans', sans-serif;white-space:nowrap;letter-spacing:0px;;transform:scaleX(0.925);transform-origin:0 0">Details here</div>
<div style="position:absolute;left:132.5px;top:1338.77px;font-size:24.5px;line-height:24.5px;color:#434343;font-weight:normal;font-family:'Liberation Sans', sans-serif;white-space:nowrap;letter-spacing:0px;;transform:scaleX(0.925);transform-origin:0 0">Sponsored Content</div>
<div style="position:absolute;left:668px;top:1338.77px;font-size:24.5px;line-height:24.5px;color:#434343;font-weight:normal;font-family:'Liberation Sans', sans-serif;white-space:nowrap;letter-spacing:0px;;transform:scaleX(0.925);transform-origin:0 0">Details here</div>
<div style="position:absolute;left:132.5px;top:1386.97px;font-size:24.5px;line-height:24.5px;color:#434343;font-weight:normal;font-family:'Liberation Sans', sans-serif;white-space:nowrap;letter-spacing:0px;;transform:scaleX(0.925);transform-origin:0 0">Landing Page</div>
<div style="position:absolute;left:668px;top:1386.97px;font-size:24.5px;line-height:24.5px;color:#434343;font-weight:normal;font-family:'Liberation Sans', sans-serif;white-space:nowrap;letter-spacing:0px;;transform:scaleX(0.925);transform-origin:0 0">Details here</div>
<div style="position:absolute;left:132.5px;top:1435.17px;font-size:24.5px;line-height:24.5px;color:#434343;font-weight:normal;font-family:'Liberation Sans', sans-serif;white-space:nowrap;letter-spacing:0px;;transform:scaleX(0.925);transform-origin:0 0">White Papers / Ebooks</div>
<div style="position:absolute;left:668px;top:1435.17px;font-size:24.5px;line-height:24.5px;color:#434343;font-weight:normal;font-family:'Liberation Sans', sans-serif;white-space:nowrap;letter-spacing:0px;;transform:scaleX(0.925);transform-origin:0 0">Details here</div>
<div style="position:absolute;left:132.5px;top:1579.77px;font-size:24.5px;line-height:24.5px;color:#434343;font-weight:normal;font-family:'Liberation Sans', sans-serif;white-space:nowrap;letter-spacing:0px;;transform:scaleX(0.925);transform-origin:0 0">Social Media Website / App 1</div>
<div style="position:absolute;left:668px;top:1579.77px;font-size:24.5px;line-height:24.5px;color:#434343;font-weight:normal;font-family:'Liberation Sans', sans-serif;white-space:nowrap;letter-spacing:0px;;transform:scaleX(0.925);transform-origin:0 0">Details here</div>
<div style="position:absolute;left:132.5px;top:1627.98px;font-size:24.5px;line-height:24.5px;color:#434343;font-weight:normal;font-family:'Liberation Sans', sans-serif;white-space:nowrap;letter-spacing:0px;;transform:scaleX(0.925);transform-origin:0 0">Social Media Website / App 2</div>
<div style="position:absolute;left:668px;top:1627.98px;font-size:24.5px;line-height:24.5px;color:#434343;font-weight:normal;font-family:'Liberation Sans', sans-serif;white-space:nowrap;letter-spacing:0px;;transform:scaleX(0.925);transform-origin:0 0">Details here</div>
<div style="position:absolute;left:132.5px;top:1676.17px;font-size:24.5px;line-height:24.5px;color:#434343;font-weight:normal;font-family:'Liberation Sans', sans-serif;white-space:nowrap;letter-spacing:0px;;transform:scaleX(0.925);transform-origin:0 0">Social Media Website / App 3</div>
<div style="position:absolute;left:668px;top:1676.17px;font-size:24.5px;line-height:24.5px;color:#434343;font-weight:normal;font-family:'Liberation Sans', sans-serif;white-space:nowrap;letter-spacing:0px;;transform:scaleX(0.925);transform-origin:0 0">Details here</div>
<div style="position:absolute;left:1444.3px;top:459px;width:1.6px;height:1226.5px;background:#999"></div>
<div style="position:absolute;left:0px;top:1684.6px;width:2131px;height:22.4px;background:#fff;border-top:1.4px solid #dadce0;box-sizing:border-box"></div>
<div style="position:absolute;left:0px;top:1686px;width:67.7px;height:21px;background:#f8f9fa"></div>
<div style="position:absolute;left:67.7px;top:1685.5px;width:1.3px;height:21px;background:#c7c7c7"></div>
<div style="position:absolute;left:72.5px;top:1688px;width:949px;height:15px;background:#dadce0;border-radius:8px"></div>
<div style="position:absolute;left:2057px;top:1686px;width:53.5px;height:21px;background:#f8f9f9"></div>
<div style="position:absolute;left:2056.5px;top:1686px;width:1.3px;height:21px;background:#dadce0"></div>
<div style="position:absolute;left:2084.5px;top:1686px;width:1.3px;height:21px;background:#dadce0"></div>
<div style="position:absolute;left:2110px;top:1686px;width:2.5px;height:21px;background:#dadce0"></div>
<svg style="position:absolute;left:2066px;top:1690.5px" width="7" height="11" viewBox="0 0 7 11"><path d="M7 0 V11 L0 5.5Z" fill="#999"/></svg>
<svg style="position:absolute;left:2095px;top:1690.5px" width="7" height="11" viewBox="0 0 7 11"><path d="M0 0 V11 L7 5.5Z" fill="#999"/></svg>
<div style="position:absolute;left:2110.5px;top:430.6px;width:20.5px;height:1254px;background:#fff"></div>
<div style="position:absolute;left:2114px;top:553px;width:15px;height:438px;background:#dadce0;border-radius:8px"></div>
<div style="position:absolute;left:2111px;top:1629.7px;width:20px;height:55px;background:#f8f9f9"></div>
<div style="position:absolute;left:2111px;top:1629px;width:20px;height:1.4px;background:#dadce0"></div>
<div style="position:absolute;left:2111px;top:1657px;width:20px;height:1.3px;background:#dadce0"></div>
<svg style="position:absolute;left:2116px;top:1638.5px" width="10" height="6" viewBox="0 0 10 6"><path d="M0 6 H10 L5 0Z" fill="#999"/></svg>
<svg style="position:absolute;left:2116px;top:1668px" width="10" height="6" viewBox="0 0 10 6"><path d="M0 0 H10 L5 6Z" fill="#999"/></svg>
<div style="position:absolute;left:2110px;top:389.4px;width:21px;height:41px;background:#f8f9fa"></div>
<div style="position:absolute;left:2110px;top:429.3px;width:21px;height:1.3px;background:#c7c7c7"></div>
<div style="position:absolute;left:2110px;top:388.4px;width:21px;height:1.3px;background:#c7c7c7"></div>
<div style="position:absolute;left:0px;top:1706.3px;width:2131px;height:1.5px;background:#dadce0"></div>
<div style="position:absolute;left:2229px;top:146px;width:851px;height:1614px;background:#fff"></div>
<svg style="position:absolute;left:2600px;top:110px" width="340" height="104" viewBox="0 0 340 104"><path d="M171 8 L316.6 103 H27.5Z" fill="#f7f8f8"/></svg>
<svg style="position:absolute;left:2257.5px;top:165px" width="28.5" height="27.5" viewBox="0 0 28.5 27.5"><rect width="28.5" height="27.5" rx="6.5" fill="#119c4c"/><path d="M15.5 6.5 C13.5 5.5 12 7 11.8 10 L11 19 C10.7 22 9 23 7 21.8" stroke="#fff" stroke-width="1.6" fill="none" stroke-linecap="round"/><path d="M8.5 12 H14.5" stroke="#fff" stroke-width="1.4"/><path d="M15.5 14.5 L21.5 21.5 M21.5 14.5 L15.5 21.5" stroke="#9fe0b8" stroke-width="1.4"/></svg>
<div style="position:absolute;left:2299.5px;top:166.50px;font-size:25.3px;line-height:25.3px;color:#1f1f1f;font-weight:normal;font-family:'Liberation Sans', sans-serif;white-space:nowrap;letter-spacing:0.05px;-webkit-text-stroke:0.55px #1f1f1f">Sheetsbase</div>
<svg style="position:absolute;left:2979px;top:166px" width="26" height="26" viewBox="0 0 26 26"><path d="M8 3 H18 M10 3 V11 L6 16 H20 L16 11 V3 M13 16 V24" stroke="#444746" stroke-width="2.4" fill="none"/><path d="M3 3 L23 23" stroke="#444746" stroke-width="2.4"/></svg>
<svg style="position:absolute;left:3036px;top:167px" width="22" height="22" viewBox="0 0 22 22"><path d="M2 2 L20 20 M20 2 L2 20" stroke="#444746" stroke-width="2.6"/></svg>
<div style="position:absolute;left:2244px;top:213px;width:827px;height:1541px;background:#1f1f1f;border-radius:24px;overflow:hidden"><div style="position:absolute;left:-2244px;top:-213px;width:3080px;height:1760px">
<svg style="position:absolute;left:2279px;top:256px" width="28" height="30" viewBox="0 0 28 30"><text x="0" y="22" font-family="Liberation Serif" font-style="italic" font-size="28" fill="#d0d0d0">f</text><text x="11" y="27" font-family="Liberation Sans" font-size="15" fill="#9a9a9a">x</text></svg>
<div style="position:absolute;left:2322px;top:258.78px;font-size:24.5px;line-height:24.5px;color:#d2d2d2;font-weight:normal;font-family:'Liberation Sans', sans-serif;white-space:nowrap;letter-spacing:-0.25px;">Sheetsbase</div>
<div style="position:absolute;left:2455.5px;top:265.84px;font-size:16px;line-height:16px;color:#a6a6a6;font-weight:normal;font-family:'Liberation Mono', monospace;white-space:nowrap;letter-spacing:0px;">(v1.0.0)</div>
<div style="position:absolute;left:2864.6px;top:240.8px;width:172.7px;height:61.5px;background:#3d3d3d;border-radius:31px"></div>
<svg style="position:absolute;left:2887px;top:257px" width="28" height="28" viewBox="0 0 28 28"><circle cx="14" cy="14" r="9" fill="#7c7c7c"/><rect x="11.3" y="2.5" width="5.4" height="6" rx="1.2" fill="#7c7c7c" transform="rotate(0 14 14)"/><rect x="11.3" y="2.5" width="5.4" height="6" rx="1.2" fill="#7c7c7c" transform="rotate(45 14 14)"/><rect x="11.3" y="2.5" width="5.4" height="6" rx="1.2" fill="#7c7c7c" transform="rotate(90 14 14)"/><rect x="11.3" y="2.5" width="5.4" height="6" rx="1.2" fill="#7c7c7c" transform="rotate(135 14 14)"/><rect x="11.3" y="2.5" width="5.4" height="6" rx="1.2" fill="#7c7c7c" transform="rotate(180 14 14)"/><rect x="11.3" y="2.5" width="5.4" height="6" rx="1.2" fill="#7c7c7c" transform="rotate(225 14 14)"/><rect x="11.3" y="2.5" width="5.4" height="6" rx="1.2" fill="#7c7c7c" transform="rotate(270 14 14)"/><rect x="11.3" y="2.5" width="5.4" height="6" rx="1.2" fill="#7c7c7c" transform="rotate(315 14 14)"/><circle cx="14" cy="14" r="3.6" fill="#e8e8e8"/></svg>
<div style="position:absolute;left:2928px;top:259.15px;font-size:25px;line-height:25px;color:#9c9c9c;font-weight:normal;font-family:'Liberation Sans', sans-serif;white-space:nowrap;letter-spacing:-0.4px;">Settings</div>
<div style="position:absolute;left:2319px;top:349.18px;font-size:24.5px;line-height:24.5px;color:#e6e6e6;font-weight:normal;font-family:'Liberation Sans', sans-serif;white-space:nowrap;letter-spacing:-0.75px;">GENERATE</div>
<div style="position:absolute;left:2592px;top:349.18px;font-size:24.5px;line-height:24.5px;color:#e6e6e6;font-weight:normal;font-family:'Liberation Sans', sans-serif;white-space:nowrap;letter-spacing:-0.64px;">FORMULAS</div>
<div style="position:absolute;left:2862.5px;top:349.18px;font-size:24.5px;line-height:24.5px;color:#ffffff;font-weight:normal;font-family:'Liberation Sans', sans-serif;white-space:nowrap;letter-spacing:-1.2px;">SHORTCUTS</div>
<div style="position:absolute;left:2244px;top:395.2px;width:827px;height:1.8px;background:#3f3f3f"></div>
<div style="position:absolute;left:2797px;top:396px;width:274px;height:3px;background:#19a84b"></div>
<div style="position:absolute;left:2279px;top:425px;width:648px;height:88px;background:#3a3a3a;border-radius:30px"></div>
<svg style="position:absolute;left:2308px;top:454px" width="30" height="30" viewBox="0 0 30 30"><circle cx="12" cy="12" r="9" stroke="#fff" stroke-width="2.6" fill="none"/><path d="M18.5 18.5 L26 26" stroke="#fff" stroke-width="2.8"/></svg>
<div style="position:absolute;left:2360px;top:451px;width:537px;overflow:hidden;font-size:27.5px;line-height:34px;color:#a7a7a7;white-space:nowrap;font-family:'Liberation Sans',sans-serif">Search 135 shortcuts (e.g. "undo", "copy cells")</div>
<div style="position:absolute;left:2947px;top:425px;width:90px;height:88px;background:#3a3a3a;border-radius:30px"></div>
<svg style="position:absolute;left:2977px;top:455px" width="30" height="26" viewBox="0 0 30 26"><path d="M1 3 H29 M6 12 H24 M11.5 21.5 H18.5" stroke="#fff" stroke-width="3.2"/></svg>
<div style="position:absolute;left:2279px;top:563.70px;font-size:20px;line-height:20px;color:#1fb355;font-weight:normal;font-family:'Liberation Sans', sans-serif;white-space:nowrap;letter-spacing:0.1px;-webkit-text-stroke:0.5px #1fb355">MOST USED (15)</div>
<div style="position:absolute;left:2463px;top:573px;width:574px;height:1.5px;background:#3c3c3c"></div>
<div style="position:absolute;left:2279px;top:606.0px;width:758px;height:178.5px;border-radius:30px;overflow:hidden;background:#393939"><div style="position:absolute;left:0;top:0;width:758px;height:96.5px;background:#454545"></div></div>
<svg style="position:absolute;left:2305.5px;top:645.9px" width="17" height="17" viewBox="0 0 17 17"><path d="M5.5 5.5 H11.5 V11.5 H5.5Z M5.5 5.5 V3.3 A2.2 2.2 0 1 0 3.3 5.5 H5.5 M11.5 5.5 V3.3 A2.2 2.2 0 1 1 13.7 5.5 H11.5 M5.5 11.5 V13.7 A2.2 2.2 0 1 1 3.3 11.5 H5.5 M11.5 11.5 V13.7 A2.2 2.2 0 1 0 13.7 11.5 H11.5" stroke="#fff" stroke-width="2" fill="none"/></svg>
<div style="position:absolute;left:2339.6px;top:642.50px;font-size:27.5px;line-height:27.5px;color:#fafafa;font-weight:normal;font-family:'Liberation Mono', monospace;white-space:nowrap;letter-spacing:0px;">+ C</div>
<div style="position:absolute;left:2886.2px;top:626.6px;width:54.8px;height:54.8px;background:#555555;border-radius:50%"></div>
<div style="position:absolute;left:2955.1px;top:626.6px;width:54.8px;height:54.8px;background:#555555;border-radius:50%"></div>
<svg style="position:absolute;left:2898.6px;top:639.0px" width="30" height="30" viewBox="0 0 30 30"><path d="M15 3.5 L18.2 11 L26.3 11.6 L20.1 16.9 L22 24.8 L15 20.6 L8 24.8 L9.9 16.9 L3.7 11.6 L11.8 11Z" stroke="#8e8e8e" stroke-width="1.9" fill="none" stroke-linejoin="round"/></svg>
<svg style="position:absolute;left:2969.5px;top:641.0px" width="26" height="26" viewBox="0 0 26 26"><rect x="1.5" y="1.5" width="15" height="15" rx="3.5" fill="#777"/><rect x="8.5" y="8.5" width="15" height="15" rx="3.5" fill="#c8c8c8"/><rect x="1.5" y="1.5" width="15" height="15" rx="3.5" fill="#808080" opacity="0.85"/></svg>
<div style="position:absolute;left:2307px;top:729.60px;font-size:28px;line-height:28px;color:#f0f0f0;font-weight:normal;font-family:'Liberation Sans', sans-serif;white-space:nowrap;letter-spacing:-0.2px;">Copy selected cells to clipboard</div>
<div style="position:absolute;left:2279px;top:802.3px;width:758px;height:178.5px;border-radius:30px;overflow:hidden;background:#393939"><div style="position:absolute;left:0;top:0;width:758px;height:96.5px;background:#454545"></div></div>
<svg style="position:absolute;left:2305.5px;top:842.1999999999999px" width="17" height="17" viewBox="0 0 17 17"><path d="M5.5 5.5 H11.5 V11.5 H5.5Z M5.5 5.5 V3.3 A2.2 2.2 0 1 0 3.3 5.5 H5.5 M11.5 5.5 V3.3 A2.2 2.2 0 1 1 13.7 5.5 H11.5 M5.5 11.5 V13.7 A2.2 2.2 0 1 1 3.3 11.5 H5.5 M11.5 11.5 V13.7 A2.2 2.2 0 1 0 13.7 11.5 H11.5" stroke="#fff" stroke-width="2" fill="none"/></svg>
<div style="position:absolute;left:2339.6px;top:838.80px;font-size:27.5px;line-height:27.5px;color:#fafafa;font-weight:normal;font-family:'Liberation Mono', monospace;white-space:nowrap;letter-spacing:0px;">+ V</div>
<div style="position:absolute;left:2886.2px;top:822.9px;width:54.8px;height:54.8px;background:#555555;border-radius:50%"></div>
<div style="position:absolute;left:2955.1px;top:822.9px;width:54.8px;height:54.8px;background:#555555;border-radius:50%"></div>
<svg style="position:absolute;left:2898.6px;top:835.3px" width="30" height="30" viewBox="0 0 30 30"><path d="M15 3.5 L18.2 11 L26.3 11.6 L20.1 16.9 L22 24.8 L15 20.6 L8 24.8 L9.9 16.9 L3.7 11.6 L11.8 11Z" stroke="#8e8e8e" stroke-width="1.9" fill="none" stroke-linejoin="round"/></svg>
<svg style="position:absolute;left:2969.5px;top:837.3px" width="26" height="26" viewBox="0 0 26 26"><rect x="1.5" y="1.5" width="15" height="15" rx="3.5" fill="#777"/><rect x="8.5" y="8.5" width="15" height="15" rx="3.5" fill="#c8c8c8"/><rect x="1.5" y="1.5" width="15" height="15" rx="3.5" fill="#808080" opacity="0.85"/></svg>
<div style="position:absolute;left:2307px;top:925.90px;font-size:28px;line-height:28px;color:#f0f0f0;font-weight:normal;font-family:'Liberation Sans', sans-serif;white-space:nowrap;letter-spacing:-0.2px;">Paste from clipboard</div>
<div style="position:absolute;left:2279px;top:998.6px;width:758px;height:178.5px;border-radius:30px;overflow:hidden;background:#393939"><div style="position:absolute;left:0;top:0;width:758px;height:96.5px;background:#454545"></div></div>
<svg style="position:absolute;left:2305.5px;top:1038.5px" width="17" height="17" viewBox="0 0 17 17"><path d="M5.5 5.5 H11.5 V11.5 H5.5Z M5.5 5.5 V3.3 A2.2 2.2 0 1 0 3.3 5.5 H5.5 M11.5 5.5 V3.3 A2.2 2.2 0 1 1 13.7 5.5 H11.5 M5.5 11.5 V13.7 A2.2 2.2 0 1 1 3.3 11.5 H5.5 M11.5 11.5 V13.7 A2.2 2.2 0 1 0 13.7 11.5 H11.5" stroke="#fff" stroke-width="2" fill="none"/></svg>
<div style="position:absolute;left:2339.6px;top:1035.10px;font-size:27.5px;line-height:27.5px;color:#fafafa;font-weight:normal;font-family:'Liberation Mono', monospace;white-space:nowrap;letter-spacing:0px;">+ X</div>
<div style="position:absolute;left:2886.2px;top:1019.1999999999999px;width:54.8px;height:54.8px;background:#555555;border-radius:50%"></div>
<div style="position:absolute;left:2955.1px;top:1019.1999999999999px;width:54.8px;height:54.8px;background:#555555;border-radius:50%"></div>
<svg style="position:absolute;left:2898.6px;top:1031.6px" width="30" height="30" viewBox="0 0 30 30"><path d="M15 3.5 L18.2 11 L26.3 11.6 L20.1 16.9 L22 24.8 L15 20.6 L8 24.8 L9.9 16.9 L3.7 11.6 L11.8 11Z" stroke="#8e8e8e" stroke-width="1.9" fill="none" stroke-linejoin="round"/></svg>
<svg style="position:absolute;left:2969.5px;top:1033.6px" width="26" height="26" viewBox="0 0 26 26"><rect x="1.5" y="1.5" width="15" height="15" rx="3.5" fill="#777"/><rect x="8.5" y="8.5" width="15" height="15" rx="3.5" fill="#c8c8c8"/><rect x="1.5" y="1.5" width="15" height="15" rx="3.5" fill="#808080" opacity="0.85"/></svg>
<div style="position:absolute;left:2307px;top:1122.20px;font-size:28px;line-height:28px;color:#f0f0f0;font-weight:normal;font-family:'Liberation Sans', sans-serif;white-space:nowrap;letter-spacing:-0.2px;">Cut selected cells</div>
<div style="position:absolute;left:2279px;top:1194.9px;width:758px;height:178.5px;border-radius:30px;overflow:hidden;background:#393939"><div style="position:absolute;left:0;top:0;width:758px;height:96.5px;background:#454545"></div></div>
<svg style="position:absolute;left:2305.5px;top:1234.8000000000002px" width="17" height="17" viewBox="0 0 17 17"><path d="M5.5 5.5 H11.5 V11.5 H5.5Z M5.5 5.5 V3.3 A2.2 2.2 0 1 0 3.3 5.5 H5.5 M11.5 5.5 V3.3 A2.2 2.2 0 1 1 13.7 5.5 H11.5 M5.5 11.5 V13.7 A2.2 2.2 0 1 1 3.3 11.5 H5.5 M11.5 11.5 V13.7 A2.2 2.2 0 1 0 13.7 11.5 H11.5" stroke="#fff" stroke-width="2" fill="none"/></svg>
<div style="position:absolute;left:2339.6px;top:1231.40px;font-size:27.5px;line-height:27.5px;color:#fafafa;font-weight:normal;font-family:'Liberation Mono', monospace;white-space:nowrap;letter-spacing:0px;">+ Z</div>
<div style="position:absolute;left:2886.2px;top:1215.5px;width:54.8px;height:54.8px;background:#555555;border-radius:50%"></div>
<div style="position:absolute;left:2955.1px;top:1215.5px;width:54.8px;height:54.8px;background:#555555;border-radius:50%"></div>
<svg style="position:absolute;left:2898.6px;top:1227.9px" width="30" height="30" viewBox="0 0 30 30"><path d="M15 3.5 L18.2 11 L26.3 11.6 L20.1 16.9 L22 24.8 L15 20.6 L8 24.8 L9.9 16.9 L3.7 11.6 L11.8 11Z" stroke="#8e8e8e" stroke-width="1.9" fill="none" stroke-linejoin="round"/></svg>
<svg style="position:absolute;left:2969.5px;top:1229.9px" width="26" height="26" viewBox="0 0 26 26"><rect x="1.5" y="1.5" width="15" height="15" rx="3.5" fill="#777"/><rect x="8.5" y="8.5" width="15" height="15" rx="3.5" fill="#c8c8c8"/><rect x="1.5" y="1.5" width="15" height="15" rx="3.5" fill="#808080" opacity="0.85"/></svg>
<div style="position:absolute;left:2307px;top:1318.50px;font-size:28px;line-height:28px;color:#f0f0f0;font-weight:normal;font-family:'Liberation Sans', sans-serif;white-space:nowrap;letter-spacing:-0.2px;">Undo last action</div>
<div style="position:absolute;left:2279px;top:1391.2px;width:758px;height:178.5px;border-radius:30px;overflow:hidden;background:#393939"><div style="position:absolute;left:0;top:0;width:758px;height:96.5px;background:#454545"></div></div>
<svg style="position:absolute;left:2305.5px;top:1431.1000000000001px" width="17" height="17" viewBox="0 0 17 17"><path d="M5.5 5.5 H11.5 V11.5 H5.5Z M5.5 5.5 V3.3 A2.2 2.2 0 1 0 3.3 5.5 H5.5 M11.5 5.5 V3.3 A2.2 2.2 0 1 1 13.7 5.5 H11.5 M5.5 11.5 V13.7 A2.2 2.2 0 1 1 3.3 11.5 H5.5 M11.5 11.5 V13.7 A2.2 2.2 0 1 0 13.7 11.5 H11.5" stroke="#fff" stroke-width="2" fill="none"/></svg>
<div style="position:absolute;left:2339.6px;top:1427.70px;font-size:27.5px;line-height:27.5px;color:#fafafa;font-weight:normal;font-family:'Liberation Mono', monospace;white-space:nowrap;letter-spacing:0px;">+ Shift + Z</div>
<div style="position:absolute;left:2886.2px;top:1411.8px;width:54.8px;height:54.8px;background:#555555;border-radius:50%"></div>
<div style="position:absolute;left:2955.1px;top:1411.8px;width:54.8px;height:54.8px;background:#555555;border-radius:50%"></div>
<svg style="position:absolute;left:2898.6px;top:1424.2px" width="30" height="30" viewBox="0 0 30 30"><path d="M15 3.5 L18.2 11 L26.3 11.6 L20.1 16.9 L22 24.8 L15 20.6 L8 24.8 L9.9 16.9 L3.7 11.6 L11.8 11Z" stroke="#8e8e8e" stroke-width="1.9" fill="none" stroke-linejoin="round"/></svg>
<svg style="position:absolute;left:2969.5px;top:1426.2px" width="26" height="26" viewBox="0 0 26 26"><rect x="1.5" y="1.5" width="15" height="15" rx="3.5" fill="#777"/><rect x="8.5" y="8.5" width="15" height="15" rx="3.5" fill="#c8c8c8"/><rect x="1.5" y="1.5" width="15" height="15" rx="3.5" fill="#808080" opacity="0.85"/></svg>
<div style="position:absolute;left:2307px;top:1514.80px;font-size:28px;line-height:28px;color:#f0f0f0;font-weight:normal;font-family:'Liberation Sans', sans-serif;white-space:nowrap;letter-spacing:-0.2px;">Redo last undone action</div>
<div style="position:absolute;left:2279px;top:1587.5px;width:758px;height:178.5px;border-radius:30px;overflow:hidden;background:#393939"><div style="position:absolute;left:0;top:0;width:758px;height:96.5px;background:#454545"></div></div>
<svg style="position:absolute;left:2305.5px;top:1627.4px" width="17" height="17" viewBox="0 0 17 17"><path d="M5.5 5.5 H11.5 V11.5 H5.5Z M5.5 5.5 V3.3 A2.2 2.2 0 1 0 3.3 5.5 H5.5 M11.5 5.5 V3.3 A2.2 2.2 0 1 1 13.7 5.5 H11.5 M5.5 11.5 V13.7 A2.2 2.2 0 1 1 3.3 11.5 H5.5 M11.5 11.5 V13.7 A2.2 2.2 0 1 0 13.7 11.5 H11.5" stroke="#fff" stroke-width="2" fill="none"/></svg>
<div style="position:absolute;left:2339.6px;top:1624.00px;font-size:27.5px;line-height:27.5px;color:#fafafa;font-weight:normal;font-family:'Liberation Mono', monospace;white-space:nowrap;letter-spacing:0px;">+ S</div>
<div style="position:absolute;left:2886.2px;top:1608.1px;width:54.8px;height:54.8px;background:#555555;border-radius:50%"></div>
<div style="position:absolute;left:2955.1px;top:1608.1px;width:54.8px;height:54.8px;background:#555555;border-radius:50%"></div>
<svg style="position:absolute;left:2898.6px;top:1620.5px" width="30" height="30" viewBox="0 0 30 30"><path d="M15 3.5 L18.2 11 L26.3 11.6 L20.1 16.9 L22 24.8 L15 20.6 L8 24.8 L9.9 16.9 L3.7 11.6 L11.8 11Z" stroke="#8e8e8e" stroke-width="1.9" fill="none" stroke-linejoin="round"/></svg>
<svg style="position:absolute;left:2969.5px;top:1622.5px" width="26" height="26" viewBox="0 0 26 26"><rect x="1.5" y="1.5" width="15" height="15" rx="3.5" fill="#777"/><rect x="8.5" y="8.5" width="15" height="15" rx="3.5" fill="#c8c8c8"/><rect x="1.5" y="1.5" width="15" height="15" rx="3.5" fill="#808080" opacity="0.85"/></svg>
<div style="position:absolute;left:2307px;top:1711.10px;font-size:28px;line-height:28px;color:#f0f0f0;font-weight:normal;font-family:'Liberation Sans', sans-serif;white-space:nowrap;letter-spacing:-0.2px;">Save spreadsheet</div>
<div style="position:absolute;left:2244px;top:1694px;width:827px;height:60px;background:linear-gradient(180deg,rgba(31,31,31,0) 0%,rgba(31,31,31,0.2) 45%,rgba(31,31,31,0.5) 75%,rgba(31,31,31,0.8) 100%)"></div>
</div></div>
<svg style="position:absolute;left:2357px;top:686.5px" width="22" height="32" viewBox="0 0 22 32"><path d="M2 2 V25 L7.5 19.5 L11.5 29 L15.5 27.3 L11.5 18 H19Z" fill="#000" stroke="#fff" stroke-width="2" stroke-linejoin="round"/></svg>
</body></html>
